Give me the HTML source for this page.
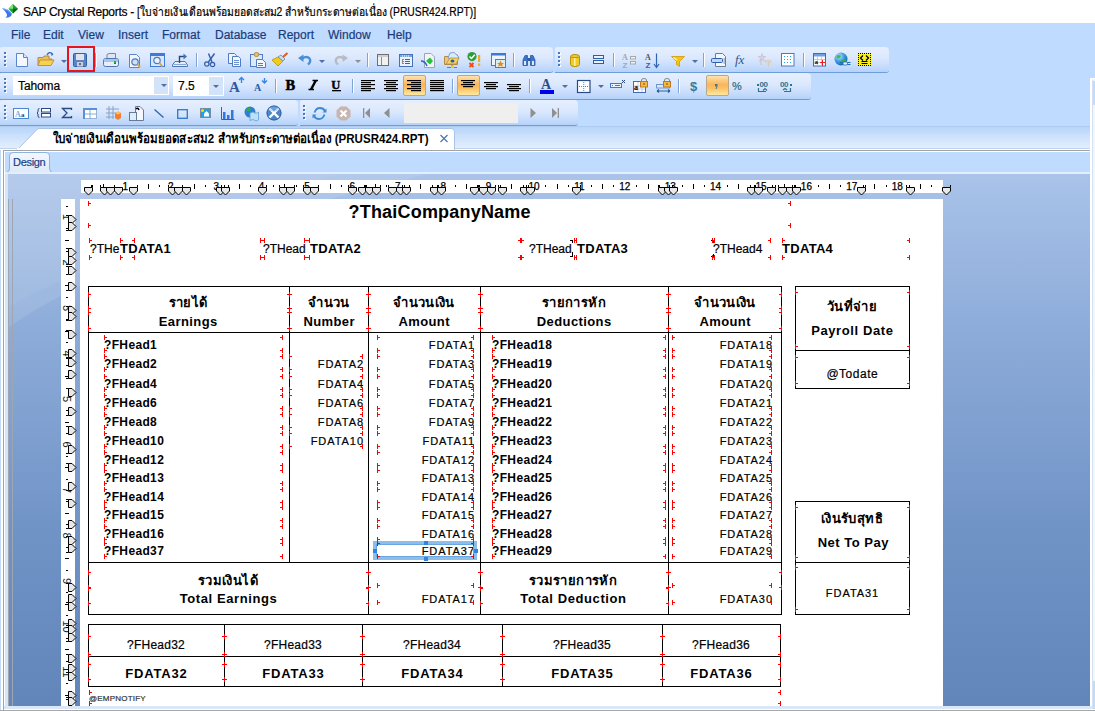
<!DOCTYPE html>
<html><head><meta charset="utf-8">
<style>
*{box-sizing:border-box}
html,body{margin:0;padding:0;width:1095px;height:711px;overflow:hidden;background:#fff;font-family:"Liberation Sans",sans-serif;position:relative}
.a{position:absolute}
.tx{position:absolute;white-space:nowrap}
.rg{-webkit-text-stroke:0.2px currentColor}
.strip{position:absolute;background:linear-gradient(#e5efff 0%,#dbe8fd 45%,#c8ddfc 75%,#b5d2fa 100%);border-bottom:1px solid #6f9ddb;border-radius:2px 4px 3px 0}
.mi{position:absolute;top:29px;font-size:12px;color:#15428b;white-space:nowrap}
svg{position:absolute;overflow:visible}
</style></head><body>

<div class="a" style="left:0px;top:0px;width:1095px;height:23px;background:#fff"></div>
<svg style="left:0;top:0" width="20" height="20" viewBox="0 0 20 20">
<path d="M2 8.2 Q9 8.5 11.8 13.5 Q12.2 17.5 5.5 17.8 Q10 15 2 8.2Z" fill="#3a78e8"/>
<path d="M3 8.6 Q8.5 9.5 10.8 13" stroke="#9cc4ff" stroke-width="0.8" fill="none"/>
<path d="M8.5 8.8 L13 4 L18 8.8 L13 13.5Z" fill="#1aa02e"/>
<path d="M8.5 8.8 L13 4 L13 8.8Z" fill="#7be37f"/>
<path d="M13 8.8 L18 8.8 L13 13.5Z" fill="#0b5e17"/>
</svg>
<div class="tx rg" style="left:23px;top:5.84px;font-size:12px;line-height:12px;font-weight:normal;color:#000;letter-spacing:-0.3px">SAP Crystal Reports - </div>
<div class="tx rg" style="left:137px;top:5.84px;font-size:12px;line-height:12px;font-weight:normal;color:#000;transform:scaleX(0.86);transform-origin:0 0">[ใบจ่ายเงินเดือนพร้อมยอดสะสม2 สำหรับกระดาษต่อเนื่อง (PRUSR424.RPT)]</div>
<div class="a" style="left:0px;top:23px;width:1095px;height:103px;background:#bfdbff"></div>
<div class="tx rg" style="left:11px;top:28.84px;font-size:12px;line-height:12px;font-weight:normal;color:#1b3c7a;">File</div>
<div class="tx rg" style="left:43px;top:28.84px;font-size:12px;line-height:12px;font-weight:normal;color:#1b3c7a;">Edit</div>
<div class="tx rg" style="left:78px;top:28.84px;font-size:12px;line-height:12px;font-weight:normal;color:#1b3c7a;">View</div>
<div class="tx rg" style="left:118px;top:28.84px;font-size:12px;line-height:12px;font-weight:normal;color:#1b3c7a;">Insert</div>
<div class="tx rg" style="left:162px;top:28.84px;font-size:12px;line-height:12px;font-weight:normal;color:#1b3c7a;">Format</div>
<div class="tx rg" style="left:215px;top:28.84px;font-size:12px;line-height:12px;font-weight:normal;color:#1b3c7a;">Database</div>
<div class="tx rg" style="left:278px;top:28.84px;font-size:12px;line-height:12px;font-weight:normal;color:#1b3c7a;">Report</div>
<div class="tx rg" style="left:328px;top:28.84px;font-size:12px;line-height:12px;font-weight:normal;color:#1b3c7a;">Window</div>
<div class="tx rg" style="left:387px;top:28.84px;font-size:12px;line-height:12px;font-weight:normal;color:#1b3c7a;">Help</div>
<div class="strip" style="left:0;top:47px;width:553px;height:26px"></div>
<div class="strip" style="left:555px;top:47px;width:334px;height:26px"></div>
<div class="strip" style="left:0;top:73px;width:811px;height:27px"></div>
<div class="strip" style="left:0;top:100px;width:298px;height:26px"></div>
<div class="strip" style="left:300px;top:100px;width:278px;height:26px"></div>
<svg style="left:4px;top:52px" width="3" height="16" viewBox="0 0 3 16"><rect x="1" y="1" width="2" height="2" fill="#fff"/><rect x="0" y="0" width="2" height="2" fill="#4a78c0"/><rect x="1" y="5" width="2" height="2" fill="#fff"/><rect x="0" y="4" width="2" height="2" fill="#4a78c0"/><rect x="1" y="9" width="2" height="2" fill="#fff"/><rect x="0" y="8" width="2" height="2" fill="#4a78c0"/><rect x="1" y="13" width="2" height="2" fill="#fff"/><rect x="0" y="12" width="2" height="2" fill="#4a78c0"/></svg>
<svg style="left:16px;top:53px" width="12" height="14" viewBox="0 0 12 14"><path d="M0.5 0.5H7.5L11.5 4.5V13.5H0.5Z" fill="#f4f8fe" stroke="#5a86cc"/><path d="M7.5 0.5V4.5H11.5" fill="#dfe9f7" stroke="#5a86cc"/></svg>
<svg style="left:37px;top:51px" width="18" height="16" viewBox="0 0 18 16"><path d="M1 6.5H6L7 5H12V8H15L13 14.5H1Z" fill="#e9c25a" stroke="#b4874a"/><path d="M3 9H17L14 14.5H1Z" fill="#f8d34a" stroke="#c0914a"/><path d="M10 4 Q12 0 15.5 3" stroke="#3d6ab3" fill="none" stroke-width="1.3"/><path d="M14 1.5L16.5 3.5L14.5 5Z" fill="#3d6ab3"/></svg>
<svg style="left:61px;top:60px" width="6" height="3" viewBox="0 0 6 3"><path d="M0 0H6L3 3Z" fill="#4d6ea8"/></svg>
<div class="a" style="left:67px;top:46px;width:28px;height:26px;border:2px solid #e8141c;background:rgba(200,222,252,0.35)"></div>
<svg style="left:73px;top:53px" width="14" height="14" viewBox="0 0 14 14"><rect x="0.5" y="0.5" width="13" height="13" rx="1" fill="#5b84c8" stroke="#35609f"/><rect x="3" y="1" width="8" height="6" fill="#dfe3ea"/><rect x="4" y="9" width="6" height="4.5" fill="#c9ced6"/><rect x="6" y="10" width="2" height="2" fill="#606b7a"/></svg>
<div class="a" style="left:95px;top:53px;width:1px;height:14px;background:#7fa5d8"></div>
<div class="a" style="left:96px;top:53px;width:1px;height:14px;background:#fff"></div>
<svg style="left:103px;top:53px" width="16" height="14" viewBox="0 0 16 14"><path d="M4 5V1.5L6 0.5H12.5V5" fill="#dfe6ef" stroke="#7b8797"/><rect x="0.5" y="5.5" width="15" height="8" rx="2" fill="#e9eef5" stroke="#4f76b4"/><rect x="1" y="6" width="14" height="3" fill="#a9c4e8"/><rect x="11" y="8" width="2" height="2" fill="#19b82f"/><rect x="11" y="10" width="2" height="1" fill="#e02020"/></svg>
<svg style="left:129px;top:54px" width="12" height="14" viewBox="0 0 12 14"><path d="M0.5 0.5H7.5L10.5 3.5V13.5H0.5Z" fill="#f2f6fc" stroke="#5a86cc"/><circle cx="6" cy="8" r="3.2" fill="#c9e4fa" stroke="#5477b8" stroke-width="1.2"/><path d="M8.3 10.3L11 13" stroke="#d9a540" stroke-width="1.8"/></svg>
<svg style="left:150px;top:53px" width="16" height="15" viewBox="0 0 16 15"><rect x="0.5" y="0.5" width="14" height="13" fill="#d8e8fb" stroke="#3f7bd6"/><rect x="1" y="1" width="13" height="2" fill="#3f7bd6"/><circle cx="7" cy="7.5" r="3.2" fill="#e8f4fe" stroke="#5477b8" stroke-width="1.2"/><path d="M9.3 9.8L12.5 13.5" stroke="#d9a540" stroke-width="1.8"/></svg>
<svg style="left:172px;top:53px" width="16" height="14" viewBox="0 0 16 14"><path d="M3 8.5H13L15.5 12V13.5H0.5V12Z" fill="#e8eef7" stroke="#4f76b4"/><rect x="2" y="11" width="12" height="1" fill="#8aa9d6"/><path d="M7.5 10V3.5H12" stroke="#27487e" stroke-width="1.4" fill="none"/><path d="M11.5 0.5L15 3.5L11.5 6.5Z" fill="#3e6fc0"/></svg>
<div class="a" style="left:196px;top:53px;width:1px;height:14px;background:#7fa5d8"></div>
<div class="a" style="left:197px;top:53px;width:1px;height:14px;background:#fff"></div>
<svg style="left:204px;top:53px" width="12" height="14" viewBox="0 0 12 14"><path d="M10.5 0.5L4.5 9" stroke="#2f5ea8" stroke-width="1.4"/><path d="M4.5 0.5L8 9" stroke="#2f5ea8" stroke-width="1.4"/><circle cx="2.8" cy="11" r="2.2" fill="none" stroke="#2f5ea8" stroke-width="1.2"/><circle cx="8.5" cy="11.5" r="2.2" fill="none" stroke="#2f5ea8" stroke-width="1.2"/></svg>
<svg style="left:228px;top:53px" width="14" height="14" viewBox="0 0 14 14"><path d="M0.5 0.5H6.5L8.5 2.5V10.5H0.5Z" fill="#eef4fc" stroke="#4f7cc4"/><path d="M4.5 3.5H10.5L12.5 5.5V13.5H4.5Z" fill="#f4f8fe" stroke="#4f7cc4"/><path d="M6 7.5H11M6 9.5H11M6 11.5H11" stroke="#6a90cf"/></svg>
<svg style="left:250px;top:52px" width="16" height="16" viewBox="0 0 16 16"><rect x="0.5" y="2.5" width="12" height="12" fill="#dce9f8" stroke="#4f7cc4"/><ellipse cx="6.5" cy="2.5" rx="2.5" ry="2" fill="#e5c26a" stroke="#b08c3a"/><path d="M6.5 7.5H12.5L15.5 10.5V15.5H6.5Z" fill="#f4f8fe" stroke="#4f7cc4"/><path d="M8 11.5H13M8 13.5H13" stroke="#3b82d8"/></svg>
<svg style="left:272px;top:53px" width="16" height="14" viewBox="0 0 16 14"><path d="M0 7L6 13L11 8L6 4Z" fill="#f0cc1d" stroke="#b99000" stroke-width="0.8"/><path d="M6 4L11 8L13 6L9 2Z" fill="#cfd9e8" stroke="#6c86b0" stroke-width="0.8"/><path d="M11 4L15.5 0" stroke="#e05a1c" stroke-width="2"/></svg>
<svg style="left:298px;top:54px" width="14" height="11" viewBox="0 0 14 11"><path d="M4 4.5 Q9 1.5 11.5 4.5 Q13.5 7.5 10 10.5" stroke="#4b8ed6" stroke-width="2.4" fill="none"/><path d="M0 4L5.5 0.5V8Z" fill="#4b8ed6"/></svg>
<svg style="left:319px;top:60px" width="6" height="3" viewBox="0 0 6 3"><path d="M0 0H6L3 3Z" fill="#4d6ea8"/></svg>
<svg style="left:334px;top:54px" width="14" height="11" viewBox="0 0 14 11"><path d="M10 4.5 Q5 1.5 2.5 4.5 Q0.5 7.5 4 10.5" stroke="#b8bcc2" stroke-width="2.4" fill="none"/><path d="M14 4L8.5 0.5V8Z" fill="#b8bcc2"/></svg>
<svg style="left:355px;top:60px" width="6" height="3" viewBox="0 0 6 3"><path d="M0 0H6L3 3Z" fill="#8a8f96"/></svg>
<div class="a" style="left:367px;top:53px;width:1px;height:14px;background:#7fa5d8"></div>
<div class="a" style="left:368px;top:53px;width:1px;height:14px;background:#fff"></div>
<svg style="left:377px;top:54px" width="12" height="12" viewBox="0 0 12 12"><rect x="0.5" y="0.5" width="11" height="11" fill="#f1f1f1" stroke="#6f6f6f"/><rect x="1" y="1" width="10" height="2" fill="#cfcfcf"/><path d="M4.5 3V11" stroke="#8a8a8a"/></svg>
<svg style="left:399px;top:54px" width="14" height="13" viewBox="0 0 14 13"><rect x="0.5" y="0.5" width="13" height="12" fill="#eaf3fd" stroke="#4671b7"/><rect x="1" y="1" width="12" height="2" fill="#6aa8e8"/><rect x="3" y="1.5" width="1" height="1" fill="#fff"/><rect x="5" y="1.5" width="1" height="1" fill="#fff"/><rect x="7" y="1.5" width="1" height="1" fill="#fff"/><rect x="9" y="1.5" width="1" height="1" fill="#fff"/><rect x="3" y="5" width="1" height="5" fill="#8a8a8a"/><rect x="3" y="5" width="2" height="1" fill="#8a8a8a"/><rect x="3" y="7" width="2" height="1" fill="#8a8a8a"/><rect x="3" y="9" width="2" height="1" fill="#8a8a8a"/><rect x="6" y="5" width="5" height="1" fill="#2f64d0"/><rect x="6" y="7" width="5" height="1" fill="#2f64d0"/><rect x="6" y="9" width="5" height="1" fill="#2f64d0"/></svg>
<svg style="left:421px;top:53px" width="14" height="15" viewBox="0 0 14 15"><path d="M3.5 0.5H10L13.5 4V14.5H3.5Z" fill="#f2f4f8" stroke="#9aa6b8"/><path d="M5 8L9 4.5L12 8L9 11.5Z" fill="#1ec43a"/><path d="M0 8 Q4 8 6 13" stroke="#2f5ed0" stroke-width="1.5" fill="none"/></svg>
<svg style="left:444px;top:52px" width="16" height="16" viewBox="0 0 16 16"><path d="M0.5 4.5H6.5L7.5 3H13.5V12.5H0.5Z" fill="#ecc873" stroke="#b48a4a"/><path d="M6 1L10 0.5L15 5L13 9L4 6Z" fill="#d7ecfa" stroke="#6a8fc7" stroke-width="0.8"/><path d="M2 12 L6 6 H15 L12 12Z" fill="#f4d45a" stroke="#b48a4a" stroke-width="0.8"/><ellipse cx="8.5" cy="9" rx="2" ry="1.6" fill="#2f56b8"/><path d="M8 12.5V15M3 15.5H13" stroke="#8a7a50"/><rect x="7" y="14" width="3" height="2" fill="#e8d020"/></svg>
<svg style="left:467px;top:52px" width="15" height="16" viewBox="0 0 15 16"><circle cx="5" cy="4.6" r="4.6" fill="#2f9e3a"/><path d="M2.5 4.5L4.5 6.5L7.8 2.8" stroke="#fff" stroke-width="1.5" fill="none"/><path d="M2.5 11L6.5 15M6.5 11L2.5 15" stroke="#f04a18" stroke-width="1.8"/><rect x="11" y="3" width="2.2" height="7" fill="#f5a623"/><rect x="11" y="11.5" width="2.2" height="2.2" fill="#f5a623"/></svg>
<svg style="left:491px;top:53px" width="15" height="15" viewBox="0 0 15 15"><rect x="0.5" y="0.5" width="14" height="12" fill="#eef5fd" stroke="#3a7ad8"/><rect x="1" y="1" width="13" height="1.5" fill="#3a7ad8"/><rect x="4.5" y="6.5" width="10" height="8" fill="#d9efef" stroke="#4b8a8a"/><path d="M9.5 7.5L10.6 10H13L11.2 11.5L11.8 14L9.5 12.6L7.2 14L7.8 11.5L6 10H8.4Z" fill="#f0801a"/></svg>
<div class="a" style="left:513px;top:53px;width:1px;height:14px;background:#7fa5d8"></div>
<div class="a" style="left:514px;top:53px;width:1px;height:14px;background:#fff"></div>
<svg style="left:522px;top:54px" width="14" height="12" viewBox="0 0 14 12"><path d="M1 11.5V6L3 1.5H5.5V11.5Z" fill="#3e74c8" stroke="#2a5aa8" stroke-width="0.8"/><path d="M8.5 11.5V1.5H11L13 6V11.5Z" fill="#3e74c8" stroke="#2a5aa8" stroke-width="0.8"/><rect x="5.5" y="4" width="3" height="3" fill="#2a5aa8"/><rect x="2" y="7" width="2" height="4" fill="#dfe9f7"/><rect x="10" y="7" width="2" height="4" fill="#dfe9f7"/></svg>
<svg style="left:558px;top:52px" width="3" height="16" viewBox="0 0 3 16"><rect x="1" y="1" width="2" height="2" fill="#fff"/><rect x="0" y="0" width="2" height="2" fill="#4a78c0"/><rect x="1" y="5" width="2" height="2" fill="#fff"/><rect x="0" y="4" width="2" height="2" fill="#4a78c0"/><rect x="1" y="9" width="2" height="2" fill="#fff"/><rect x="0" y="8" width="2" height="2" fill="#4a78c0"/><rect x="1" y="13" width="2" height="2" fill="#fff"/><rect x="0" y="12" width="2" height="2" fill="#4a78c0"/></svg>
<svg style="left:570px;top:54px" width="10" height="13" viewBox="0 0 10 13"><path d="M0.5 2.5 Q0.5 0.5 5 0.5 Q9.5 0.5 9.5 2.5 V10.5 Q9.5 12.5 5 12.5 Q0.5 12.5 0.5 10.5Z" fill="#f0cc28" stroke="#b8920a"/><path d="M1 3 Q5 4.5 9 3" stroke="#b8920a" fill="none"/><rect x="4" y="4" width="1.5" height="8" fill="#fff3a0"/></svg>
<svg style="left:593px;top:55px" width="11" height="9" viewBox="0 0 11 9"><rect x="0.5" y="0.5" width="10" height="3" fill="#eaf2fc" stroke="#2f5ea8"/><rect x="0.5" y="5.5" width="10" height="3" fill="#eaf2fc" stroke="#2f5ea8"/></svg>
<div class="a" style="left:613px;top:53px;width:1px;height:14px;background:#7fa5d8"></div>
<div class="a" style="left:614px;top:53px;width:1px;height:14px;background:#fff"></div>
<svg style="left:622px;top:53px" width="15" height="15" viewBox="0 0 15 15"><text x="0" y="7" font-size="8" font-family="Liberation Serif" fill="#a8a8a8" font-weight="bold">A</text><text x="0.5" y="14.5" font-size="8" font-family="Liberation Sans" fill="#a8a8a8" font-weight="bold">Z</text><rect x="8.5" y="3.5" width="5" height="2.5" fill="#f2f2f2" stroke="#a8a8a8"/><rect x="8.5" y="8.5" width="5" height="2.5" fill="#f2f2f2" stroke="#a8a8a8"/></svg>
<svg style="left:645px;top:53px" width="15" height="15" viewBox="0 0 15 15"><text x="0" y="7" font-size="8" font-family="Liberation Serif" fill="#555" font-weight="bold">A</text><text x="0.5" y="14.5" font-size="8" font-family="Liberation Sans" fill="#2f64b0" font-weight="bold">Z</text><path d="M11.5 0.5V14" stroke="#2f64b0" stroke-width="1.2"/><path d="M9 11L11.5 14.5L14 11" stroke="#2f64b0" stroke-width="1.2" fill="none"/></svg>
<svg style="left:671px;top:56px" width="14" height="11" viewBox="0 0 14 11"><path d="M0.5 0.5H13.5L8.5 5.5V10.5L5.5 8.5V5.5Z" fill="#f7c416" stroke="#d09a00" stroke-width="0.8"/><path d="M2.5 1.5L6 4" stroke="#fff6b0" stroke-width="1.2"/></svg>
<svg style="left:692px;top:60px" width="6" height="3" viewBox="0 0 6 3"><path d="M0 0H6L3 3Z" fill="#4d6ea8"/></svg>
<div class="a" style="left:703px;top:53px;width:1px;height:14px;background:#7fa5d8"></div>
<div class="a" style="left:704px;top:53px;width:1px;height:14px;background:#fff"></div>
<svg style="left:711px;top:53px" width="16" height="14" viewBox="0 0 16 14"><path d="M4.5 0.5H11.5L14.5 3.5V13.5H4.5Z" fill="#f3f6fb" stroke="#6d7c94"/><rect x="0.5" y="5.5" width="11" height="4" rx="1" fill="#bcd8f6" stroke="#2f5ea8"/><path d="M12.5 6H14M12.5 8H14M12.5 10H14" stroke="#6d7c94"/></svg>
<svg style="left:735px;top:53px" width="14" height="14" viewBox="0 0 14 14"><text x="0" y="11" font-size="13" font-family="Liberation Serif" font-style="italic" fill="#33548a">fx</text></svg>
<svg style="left:758px;top:53px" width="14" height="14" viewBox="0 0 14 14"><path d="M4 0.5L5 3.5H8L5.5 5.5L6.5 8.5L4 6.5L1.5 8.5L2.5 5.5L0 3.5H3Z" fill="#d8d0dc" stroke="#c0b8c8" stroke-width="0.5"/><path d="M3 6V12" stroke="#c8bcc8"/><path d="M7 7.5L10.5 6L13.5 7.5V11.5L10.5 13.5L7 11.5Z" fill="#ded8d2"/><path d="M7 7.5L10.5 9L13.5 7.5M10.5 9V13.5" stroke="#c9c2ba" fill="none" stroke-width="0.6"/></svg>
<svg style="left:781px;top:53px" width="14" height="14" viewBox="0 0 14 14"><rect x="0.5" y="0.5" width="12.5" height="12.5" fill="#fff" stroke="#4a7ac2"/><rect x="3" y="3" width="1" height="1" fill="#33a0e6"/><rect x="3" y="6" width="1" height="1" fill="#33a0e6"/><rect x="3" y="9" width="1" height="1" fill="#33a0e6"/><rect x="6" y="3" width="1" height="1" fill="#33a0e6"/><rect x="6" y="6" width="1" height="1" fill="#33a0e6"/><rect x="6" y="9" width="1" height="1" fill="#33a0e6"/><rect x="9" y="3" width="1" height="1" fill="#33a0e6"/><rect x="9" y="6" width="1" height="1" fill="#33a0e6"/><rect x="9" y="9" width="1" height="1" fill="#33a0e6"/></svg>
<div class="a" style="left:803px;top:53px;width:1px;height:14px;background:#7fa5d8"></div>
<div class="a" style="left:804px;top:53px;width:1px;height:14px;background:#fff"></div>
<svg style="left:813px;top:53px" width="13" height="14" viewBox="0 0 13 14"><rect x="0.5" y="0.5" width="12" height="12.5" fill="#fff" stroke="#3e6db8"/><rect x="1" y="1" width="11" height="2.5" fill="#6fa0e6"/><path d="M1 6.5H12M1 9.5H12M4.5 3.5V13M8.5 3.5V13" stroke="#a9c4ea" stroke-width="0.8"/><text x="1.5" y="10.5" font-size="7" font-weight="bold" font-family="Liberation Serif" fill="#000">a</text><path d="M7 9.5H12M9.5 7V13" stroke="#e82020"/></svg>
<svg style="left:834px;top:52px" width="17" height="16" viewBox="0 0 17 16"><defs><radialGradient id="gl" cx="0.35" cy="0.3" r="0.8"><stop offset="0" stop-color="#bfe6ff"/><stop offset="0.5" stop-color="#3a9ae0"/><stop offset="1" stop-color="#1a5aa8"/></radialGradient></defs><circle cx="7" cy="7" r="6.5" fill="url(#gl)"/><path d="M2.5 4 Q5 2 7 4 Q6 7 3.5 6.5Z M8 8 Q11 6.5 12.5 9 Q10 11.5 8.5 10Z" fill="#3ab43c" opacity="0.9"/><path d="M6 12.5H16.5M6 10.5H16.5" stroke="#1a6fb8" stroke-width="1.2"/><rect x="9" y="10" width="4.5" height="3" rx="1" fill="#e8f2fc" stroke="#1a6fb8" stroke-width="0.8"/></svg>
<svg style="left:858px;top:53px" width="13" height="13" viewBox="0 0 13 13"><rect x="0" y="0" width="13" height="13" fill="#f8f020"/><rect x="0" y="0" width="1" height="1" fill="#000"/><rect x="0" y="12" width="1" height="1" fill="#000"/><rect x="0" y="0" width="1" height="1" fill="#000"/><rect x="12" y="0" width="1" height="1" fill="#000"/><rect x="2" y="0" width="1" height="1" fill="#000"/><rect x="2" y="12" width="1" height="1" fill="#000"/><rect x="0" y="2" width="1" height="1" fill="#000"/><rect x="12" y="2" width="1" height="1" fill="#000"/><rect x="4" y="0" width="1" height="1" fill="#000"/><rect x="4" y="12" width="1" height="1" fill="#000"/><rect x="0" y="4" width="1" height="1" fill="#000"/><rect x="12" y="4" width="1" height="1" fill="#000"/><rect x="6" y="0" width="1" height="1" fill="#000"/><rect x="6" y="12" width="1" height="1" fill="#000"/><rect x="0" y="6" width="1" height="1" fill="#000"/><rect x="12" y="6" width="1" height="1" fill="#000"/><rect x="8" y="0" width="1" height="1" fill="#000"/><rect x="8" y="12" width="1" height="1" fill="#000"/><rect x="0" y="8" width="1" height="1" fill="#000"/><rect x="12" y="8" width="1" height="1" fill="#000"/><rect x="10" y="0" width="1" height="1" fill="#000"/><rect x="10" y="12" width="1" height="1" fill="#000"/><rect x="0" y="10" width="1" height="1" fill="#000"/><rect x="12" y="10" width="1" height="1" fill="#000"/><rect x="12" y="0" width="1" height="1" fill="#000"/><rect x="12" y="12" width="1" height="1" fill="#000"/><rect x="0" y="12" width="1" height="1" fill="#000"/><rect x="12" y="12" width="1" height="1" fill="#000"/><path d="M5 2.5L2.5 5L5 7.5M8 2.5L10.5 5L8 7.5" stroke="#000" fill="none" stroke-width="1.3"/><path d="M3.5 8.5H9.5M3.5 10.5H9.5" stroke="#000"/></svg>
<svg style="left:4px;top:78px" width="3" height="16" viewBox="0 0 3 16"><rect x="1" y="1" width="2" height="2" fill="#fff"/><rect x="0" y="0" width="2" height="2" fill="#4a78c0"/><rect x="1" y="5" width="2" height="2" fill="#fff"/><rect x="0" y="4" width="2" height="2" fill="#4a78c0"/><rect x="1" y="9" width="2" height="2" fill="#fff"/><rect x="0" y="8" width="2" height="2" fill="#4a78c0"/><rect x="1" y="13" width="2" height="2" fill="#fff"/><rect x="0" y="12" width="2" height="2" fill="#4a78c0"/></svg>
<div class="a" style="left:13px;top:76px;width:156px;height:19px;background:#fff"></div>
<div class="a" style="left:154px;top:77px;width:14px;height:17px;background:#d3e3fa"></div>
<svg style="left:161px;top:84px" width="6" height="3" viewBox="0 0 6 3"><path d="M0 0H6L3 3Z" fill="#4d6ea8"/></svg>
<div class="tx rg" style="left:18px;top:79.54px;font-size:12px;line-height:12px;font-weight:normal;color:#000;letter-spacing:-0.1px">Tahoma</div>
<div class="a" style="left:173px;top:76px;width:51px;height:20px;background:#fff"></div>
<div class="a" style="left:209px;top:77px;width:14px;height:18px;background:#d3e3fa"></div>
<svg style="left:213px;top:85px" width="6" height="3" viewBox="0 0 6 3"><path d="M0 0H6L3 3Z" fill="#4d6ea8"/></svg>
<div class="tx rg" style="left:178px;top:79.84px;font-size:12px;line-height:12px;font-weight:normal;color:#000;">7.5</div>
<svg style="left:229px;top:77px" width="16" height="16" viewBox="0 0 16 16"><text x="0" y="15" font-size="15" font-family="Liberation Serif" font-weight="bold" fill="#2c5aa0">A</text><path d="M12.5 0.5V6M10 3L12.5 0.5L15 3" stroke="#3a86e0" stroke-width="1.4" fill="none"/></svg>
<svg style="left:254px;top:78px" width="14" height="14" viewBox="0 0 14 14"><text x="0" y="13" font-size="10" font-family="Liberation Serif" font-weight="bold" fill="#2c5aa0">A</text><path d="M10.5 0V5M8 2.5L10.5 5L13 2.5" stroke="#3a86e0" stroke-width="1.4" fill="none"/></svg>
<div class="a" style="left:275px;top:79px;width:1px;height:14px;background:#7fa5d8"></div>
<div class="a" style="left:276px;top:79px;width:1px;height:14px;background:#fff"></div>
<svg style="left:285px;top:79px" width="12" height="13" viewBox="0 0 12 13"><text x="0.5" y="11" font-size="14.5" font-family="Liberation Serif" font-weight="bold" fill="#000" stroke="#000" stroke-width="0.5">B</text></svg>
<svg style="left:308px;top:80px" width="12" height="12" viewBox="0 0 12 12"><path d="M4.5 0.5H10 M0.5 9.5H6 M7.8 0.5L3 9.5" stroke="#000" stroke-width="1.3" fill="none"/><path d="M7.8 0.5L3 9.5" stroke="#000" stroke-width="2.4"/></svg>
<svg style="left:331px;top:79px" width="12" height="13" viewBox="0 0 12 13"><text x="0.3" y="9.5" font-size="12.5" font-family="Liberation Serif" font-weight="bold" fill="#000" stroke="#000" stroke-width="0.4">U</text><rect x="1" y="11" width="9" height="1.3" fill="#000"/></svg>
<div class="a" style="left:352px;top:79px;width:1px;height:14px;background:#7fa5d8"></div>
<div class="a" style="left:353px;top:79px;width:1px;height:14px;background:#fff"></div>
<svg style="left:361px;top:80px" width="15" height="12" viewBox="0 0 15 12"><rect x="0" y="0" width="14" height="1.2" fill="#000"/><rect x="0" y="2" width="10" height="1.2" fill="#000"/><rect x="0" y="4" width="14" height="1.2" fill="#000"/><rect x="0" y="6" width="10" height="1.2" fill="#000"/><rect x="0" y="8" width="14" height="1.2" fill="#000"/><rect x="0" y="10" width="10" height="1.2" fill="#000"/></svg>
<svg style="left:384px;top:80px" width="15" height="12" viewBox="0 0 15 12"><rect x="0" y="0" width="14" height="1.2" fill="#000"/><rect x="2" y="2" width="10" height="1.2" fill="#000"/><rect x="0" y="4" width="14" height="1.2" fill="#000"/><rect x="2" y="6" width="10" height="1.2" fill="#000"/><rect x="0" y="8" width="14" height="1.2" fill="#000"/><rect x="2" y="10" width="10" height="1.2" fill="#000"/></svg>
<div class="a" style="left:403px;top:75px;width:23px;height:21px;background:linear-gradient(#fde3b0 0%,#fbb558 45%,#fbc166 65%,#fee8a0 100%);border:1px solid #b9a788;border-radius:2px"></div>
<svg style="left:407px;top:80px" width="15" height="12" viewBox="0 0 15 12"><rect x="0" y="0" width="14" height="1.2" fill="#000"/><rect x="4" y="2" width="10" height="1.2" fill="#000"/><rect x="0" y="4" width="14" height="1.2" fill="#000"/><rect x="4" y="6" width="10" height="1.2" fill="#000"/><rect x="0" y="8" width="14" height="1.2" fill="#000"/><rect x="4" y="10" width="10" height="1.2" fill="#000"/></svg>
<svg style="left:430px;top:80px" width="15" height="12" viewBox="0 0 15 12"><rect x="0" y="0" width="14" height="1.2" fill="#000"/><rect x="0" y="2" width="14" height="1.2" fill="#000"/><rect x="0" y="4" width="14" height="1.2" fill="#000"/><rect x="0" y="6" width="14" height="1.2" fill="#000"/><rect x="0" y="8" width="14" height="1.2" fill="#000"/><rect x="0" y="10" width="14" height="1.2" fill="#000"/></svg>
<div class="a" style="left:452px;top:79px;width:1px;height:14px;background:#7fa5d8"></div>
<div class="a" style="left:453px;top:79px;width:1px;height:14px;background:#fff"></div>
<div class="a" style="left:457px;top:75px;width:23px;height:21px;background:linear-gradient(#fde3b0 0%,#fbb558 45%,#fbc166 65%,#fee8a0 100%);border:1px solid #b9a788;border-radius:2px"></div>
<svg style="left:461px;top:80px" width="15" height="12" viewBox="0 0 15 12"><rect x="0" y="0" width="14" height="1.2" fill="#000"/><rect x="2" y="2" width="10" height="1.2" fill="#000"/><rect x="0" y="4" width="14" height="1.2" fill="#000"/><rect x="2" y="6" width="10" height="1.2" fill="#000"/></svg>
<svg style="left:484px;top:82px" width="15" height="8" viewBox="0 0 15 8"><rect x="0" y="0" width="14" height="1.2" fill="#000"/><rect x="2" y="2" width="10" height="1.2" fill="#000"/><rect x="0" y="4" width="14" height="1.2" fill="#000"/><rect x="2" y="6" width="10" height="1.2" fill="#000"/></svg>
<svg style="left:507px;top:84px" width="15" height="8" viewBox="0 0 15 8"><rect x="0" y="0" width="14" height="1.2" fill="#000"/><rect x="2" y="2" width="10" height="1.2" fill="#000"/><rect x="0" y="4" width="14" height="1.2" fill="#000"/><rect x="2" y="6" width="10" height="1.2" fill="#000"/></svg>
<div class="a" style="left:529px;top:79px;width:1px;height:14px;background:#7fa5d8"></div>
<div class="a" style="left:530px;top:79px;width:1px;height:14px;background:#fff"></div>
<svg style="left:540px;top:77px" width="15" height="17" viewBox="0 0 15 17"><text x="1" y="11.5" font-size="14" font-family="Liberation Serif" font-weight="bold" fill="#2c4f8a">A</text><rect x="0" y="13" width="14" height="4" fill="#0000f0"/></svg>
<svg style="left:562px;top:85px" width="6" height="3" viewBox="0 0 6 3"><path d="M0 0H6L3 3Z" fill="#4d6ea8"/></svg>
<svg style="left:577px;top:80px" width="14" height="13" viewBox="0 0 14 13"><rect x="0.5" y="0.5" width="12.5" height="12" fill="#fff" stroke="#2a4a86" stroke-width="1.2"/><path d="M6.75 2V11M2 6.5H11.5" stroke="#3a86e0" stroke-dasharray="1 1"/></svg>
<svg style="left:598px;top:85px" width="6" height="3" viewBox="0 0 6 3"><path d="M0 0H6L3 3Z" fill="#4d6ea8"/></svg>
<svg style="left:610px;top:79px" width="16" height="10" viewBox="0 0 16 10"><rect x="0.5" y="4.5" width="11" height="4" fill="#eaf3fd" stroke="#3a7ad8"/><rect x="2" y="6" width="1" height="1" fill="#3a7ad8"/><path d="M5 6.5H10" stroke="#3a7ad8"/><path d="M12 1L15 4M15 1L12 4" stroke="#2a4a86"/></svg>
<svg style="left:633px;top:78px" width="16" height="16" viewBox="0 0 16 16"><rect x="0.5" y="3.5" width="12" height="11" fill="#fff" stroke="#3e6db8"/><path d="M1 8H12M1 11H12M5 4V14M9 4V14" stroke="#a9c4ea" stroke-width="0.8"/><text x="1" y="12" font-size="8" font-weight="bold" font-family="Liberation Serif" fill="#000">a</text><path d="M8.5 3.5V2 Q8.5 0.5 11 0.5 Q13.5 0.5 13.5 2V3.5" stroke="#8a8a8a" fill="none"/><rect x="7.5" y="3.5" width="7" height="5.5" fill="#f0b848" stroke="#c07820"/><rect x="10" y="5.5" width="2" height="1" fill="#8a4a10"/></svg>
<svg style="left:656px;top:78px" width="16" height="16" viewBox="0 0 16 16"><rect x="0.5" y="6.5" width="13" height="3.5" fill="#dde9f7" stroke="#6f96cc"/><path d="M1 13H14M1 13L3 11.5M1 13L3 14.5M14 13L12 11.5M14 13L12 14.5" stroke="#2f5ea8" stroke-width="1.2" fill="none"/><path d="M8.5 3.5V2 Q8.5 0.5 11 0.5 Q13.5 0.5 13.5 2V3.5" stroke="#8a8a8a" fill="none"/><rect x="7.5" y="3.5" width="7" height="5.5" fill="#f0b848" stroke="#c07820"/><rect x="10" y="5.5" width="2" height="1" fill="#8a4a10"/></svg>
<div class="a" style="left:678px;top:79px;width:1px;height:14px;background:#7fa5d8"></div>
<div class="a" style="left:679px;top:79px;width:1px;height:14px;background:#fff"></div>
<svg style="left:690px;top:79px" width="9" height="14" viewBox="0 0 9 14"><text x="0" y="12" font-size="13" font-family="Liberation Sans" font-weight="bold" fill="#3a7a94">$</text></svg>
<div class="a" style="left:706px;top:75px;width:23px;height:21px;background:linear-gradient(#fde3b0 0%,#fbb558 45%,#fbc166 65%,#fee8a0 100%);border:1px solid #b9a788;border-radius:2px"></div>
<svg style="left:715px;top:84px" width="4" height="6" viewBox="0 0 4 6"><rect x="0" y="0" width="2.5" height="2.5" fill="#3a7a94"/><path d="M2 2.5L1 5" stroke="#3a7a94" stroke-width="1"/></svg>
<svg style="left:732px;top:81px" width="15" height="10" viewBox="0 0 15 10"><text x="0" y="9" font-size="11" font-family="Liberation Sans" font-weight="bold" fill="#3a7a94">%</text></svg>
<svg style="left:757px;top:80px" width="13" height="13" viewBox="0 0 13 13"><rect x="0" y="4" width="2" height="2" fill="#2f7490"/><text x="2.5" y="6.5" font-size="8" font-weight="bold" font-family="Liberation Sans" fill="#2f7490" letter-spacing="-0.5">00</text><path d="M1.5 8V11.5H9 M6 10.5L8 8.5L10 10.5" stroke="#2f7490" stroke-width="1.2" fill="none"/></svg>
<svg style="left:780px;top:80px" width="13" height="13" viewBox="0 0 13 13"><text x="0" y="6.5" font-size="8" font-weight="bold" font-family="Liberation Sans" fill="#2f7490" letter-spacing="-0.5">00</text><rect x="10" y="4" width="2" height="2" fill="#2f7490"/><path d="M10.5 8V11.5H4 M3 10L5 8.5L7 10" stroke="#2f7490" stroke-width="1.2" fill="none"/></svg>
<svg style="left:4px;top:105px" width="3" height="16" viewBox="0 0 3 16"><rect x="1" y="1" width="2" height="2" fill="#fff"/><rect x="0" y="0" width="2" height="2" fill="#4a78c0"/><rect x="1" y="5" width="2" height="2" fill="#fff"/><rect x="0" y="4" width="2" height="2" fill="#4a78c0"/><rect x="1" y="9" width="2" height="2" fill="#fff"/><rect x="0" y="8" width="2" height="2" fill="#4a78c0"/><rect x="1" y="13" width="2" height="2" fill="#fff"/><rect x="0" y="12" width="2" height="2" fill="#4a78c0"/></svg>
<svg style="left:13px;top:108px" width="16" height="11" viewBox="0 0 16 11"><rect x="0.5" y="0.5" width="15" height="10" fill="#fff" stroke="#4a86d6"/><text x="2" y="8.5" font-size="8" font-family="Liberation Serif" font-weight="bold" fill="#7ea6e0">A</text><text x="8" y="8.5" font-size="7" font-family="Liberation Serif" font-weight="bold" fill="#1f3f7a">a</text></svg>
<svg style="left:37px;top:108px" width="14" height="10" viewBox="0 0 14 10"><path d="M2.5 0.5Q1 0.5 1 2V4L0 5L1 6V8Q1 9.5 2.5 9.5" stroke="#2a4a86" fill="none"/><rect x="4.5" y="0.5" width="9" height="3.5" fill="#fff" stroke="#2a4a86"/><rect x="4.5" y="5.5" width="9" height="3.5" fill="#fff" stroke="#2a4a86"/></svg>
<svg style="left:62px;top:108px" width="10" height="10" viewBox="0 0 10 10"><path d="M9.5 2V0.5H0.5L5 5L0.5 9.5H9.5V8" stroke="#2a4a86" stroke-width="1.3" fill="none"/></svg>
<svg style="left:83px;top:108px" width="14" height="11" viewBox="0 0 14 11"><rect x="0.5" y="0.5" width="13" height="10" fill="#fff" stroke="#9ab2d6"/><rect x="0" y="0" width="14" height="2" fill="#5b8fd8"/><rect x="0" y="0" width="2" height="11" fill="#5b8fd8"/><path d="M7 2V11M2 6H14" stroke="#7fb0d8"/></svg>
<svg style="left:106px;top:106px" width="15" height="15" viewBox="0 0 15 15"><path d="M3 0V13M7 0V13M0 3H13M0 7H13M0 11H8" stroke="#8aa0c8"/><path d="M9 7L12 5.5L15 7V12L12 14L9 12Z" fill="#f08030"/><path d="M9 7L12 8.5L15 7L12 5.5Z" fill="#ffc060"/></svg>
<svg style="left:129px;top:106px" width="15" height="15" viewBox="0 0 15 15"><path d="M6.5 0.5H11L14.5 4V14.5H6.5Z" fill="#f4f8fe" stroke="#6a7a96"/><rect x="0.5" y="6.5" width="7" height="8" fill="#dbeefd" stroke="#6a7a96"/><path d="M7 3Q9 1 10 4" stroke="#000" stroke-width="1.5" fill="none"/></svg>
<svg style="left:154px;top:109px" width="10" height="9" viewBox="0 0 10 9"><path d="M0.5 0.5L9.5 8.5" stroke="#2f64b0" stroke-width="1.3"/></svg>
<svg style="left:177px;top:109px" width="11" height="10" viewBox="0 0 11 10"><rect x="0.7" y="0.7" width="9.6" height="8.6" fill="none" stroke="#2f78d0" stroke-width="1.3"/></svg>
<svg style="left:200px;top:108px" width="11" height="10" viewBox="0 0 11 10"><rect x="0.5" y="0.5" width="10" height="9" fill="#1fa0e8" stroke="#7a8a96"/><path d="M4 5.5L6.5 3L9 5.5V8.5H4Z" fill="#fff"/><circle cx="2.5" cy="2.5" r="1.5" fill="#ffe000"/></svg>
<svg style="left:221px;top:107px" width="14" height="13" viewBox="0 0 14 13"><path d="M0.5 0V12.5H13.5" stroke="#2f64b0" fill="none"/><rect x="2" y="5" width="2.5" height="7" fill="#2f78e0"/><rect x="6" y="8" width="2.5" height="4" fill="#2f78e0"/><rect x="10" y="3" width="2.5" height="9" fill="#2f78e0"/></svg>
<svg style="left:244px;top:106px" width="15" height="15" viewBox="0 0 15 15"><circle cx="6" cy="6" r="5.5" fill="#2f7fd0"/><path d="M2 3Q5 1 7 3Q6 6 3 5Z M7 7Q10 5 11 8Q9 10 7 9Z" fill="#2fb03a"/><path d="M6 7L9 6L12 7.5L14.5 6V14L12 15L9 13.5L6 14.5Z" fill="#bde0f8" stroke="#5aa0d8" stroke-width="0.8"/></svg>
<svg style="left:266px;top:105px" width="16" height="16" viewBox="0 0 16 16"><circle cx="8" cy="8" r="7.5" fill="#4a86c8"/><circle cx="8" cy="8" r="7" fill="none" stroke="#2a5a9a" stroke-width="0.8"/><path d="M3.5 3.5L12.5 12.5M12.5 3.5L3.5 12.5" stroke="#fff" stroke-width="2.4"/><ellipse cx="8" cy="4" rx="4.5" ry="2.5" fill="#8ab8e8" opacity="0.5"/></svg>
<svg style="left:303px;top:105px" width="3" height="16" viewBox="0 0 3 16"><rect x="1" y="1" width="2" height="2" fill="#fff"/><rect x="0" y="0" width="2" height="2" fill="#4a78c0"/><rect x="1" y="5" width="2" height="2" fill="#fff"/><rect x="0" y="4" width="2" height="2" fill="#4a78c0"/><rect x="1" y="9" width="2" height="2" fill="#fff"/><rect x="0" y="8" width="2" height="2" fill="#4a78c0"/><rect x="1" y="13" width="2" height="2" fill="#fff"/><rect x="0" y="12" width="2" height="2" fill="#4a78c0"/></svg>
<svg style="left:312px;top:107px" width="15" height="13" viewBox="0 0 15 13"><path d="M2.5 5.5 Q4 1 8 1 Q11.5 1 13 4" stroke="#3a8ad8" stroke-width="1.8" fill="none"/><path d="M14.5 1.5V5.5H10.5Z" fill="#3a8ad8"/><path d="M12.5 7.5 Q11 12 7 12 Q3.5 12 2 9" stroke="#3a8ad8" stroke-width="1.8" fill="none"/><path d="M0.5 11.5V7.5H4.5Z" fill="#3a8ad8"/></svg>
<svg style="left:336px;top:106px" width="15" height="15" viewBox="0 0 15 15"><path d="M4.5 0.5H10.5L14.5 4.5V10.5L10.5 14.5H4.5L0.5 10.5V4.5Z" fill="#c8b4b0"/><path d="M4.5 4.5L10.5 10.5M10.5 4.5L4.5 10.5" stroke="#fff" stroke-width="2.2"/></svg>
<svg style="left:363px;top:108px" width="7" height="10" viewBox="0 0 7 10"><rect x="0" y="0" width="1.3" height="10" fill="#8f8f8f"/><path d="M7 0V10L2 5Z" fill="#8f8f8f"/></svg>
<svg style="left:384px;top:108px" width="6" height="10" viewBox="0 0 6 10"><path d="M5.5 0V10L0 5Z" fill="#8f8f8f"/></svg>
<div class="a" style="left:404px;top:103px;width:114px;height:20px;background:#efefef"></div>
<svg style="left:530px;top:108px" width="6" height="10" viewBox="0 0 6 10"><path d="M0.5 0V10L6 5Z" fill="#8f8f8f"/></svg>
<svg style="left:552px;top:108px" width="7" height="10" viewBox="0 0 7 10"><path d="M0 0V10L5 5Z" fill="#8f8f8f"/><rect x="5.7" y="0" width="1.3" height="10" fill="#8f8f8f"/></svg>
<div class="a" style="left:0px;top:126px;width:1095px;height:24px;background:linear-gradient(#b5d3fb,#d0e3fc 50%,#e6f0fd)"></div>
<div class="a" style="left:0px;top:126px;width:1095px;height:1px;background:#afcbee"></div>
<div class="a" style="left:0px;top:148px;width:1095px;height:1px;background:#bed5f0"></div>
<div class="a" style="left:0px;top:149px;width:1095px;height:1px;background:#fff"></div>
<svg style="left:0;top:128px" width="470" height="23" viewBox="0 0 470 23">
<path d="M17 22 L37 1.5 Q38 0.5 40 0.5 L451 0.5 Q454.5 0.5 454.5 4 L454.5 21.5 L17 21.5Z" fill="#fff" stroke="#a9c3e6" stroke-width="1"/><rect x="17" y="20" width="437" height="3" fill="#fff"/>
</svg>
<div class="tx" style="left:53px;top:132.00px;font-size:13px;line-height:13px;font-weight:bold;color:#000;transform:scaleX(0.890);transform-origin:0 0">ใบจ่ายเงินเดือนพร้อมยอดสะสม2 สำหรับกระดาษต่อเนื่อง (PRUSR424.RPT)</div>
<svg style="left:439px;top:133px" width="10" height="10" viewBox="0 0 10 10"><path d="M1.5 2 L8.5 9 M8.5 2 L1.5 9" stroke="#4a6fae" stroke-width="1.1"/></svg>
<div class="a" style="left:0px;top:150px;width:1095px;height:561px;background:#fff"></div>
<div class="a" style="left:0px;top:150px;width:1px;height:561px;background:#c3daf5"></div>
<div class="a" style="left:3px;top:150px;width:1090px;height:1px;background:#a3a3a3"></div>
<div class="a" style="left:3px;top:150px;width:1px;height:561px;background:#a3a3a3"></div>
<div class="a" style="left:5px;top:152px;width:1087px;height:554px;background:#d6e5f7"></div>
<div class="a" style="left:5px;top:152px;width:1085px;height:20px;background:#bfdbff"></div>
<div class="a" style="left:1090px;top:78px;width:5px;height:633px;background:#f3f7fc"></div>
<div class="a" style="left:1091px;top:78px;width:4px;height:1px;background:#fff"></div>
<div class="a" style="left:1090px;top:78px;width:2px;height:633px;background:#fff"></div>
<div class="a" style="left:1092px;top:80px;width:1px;height:631px;background:#d3e1f1"></div>
<div class="a" style="left:1093px;top:81px;width:2px;height:24px;background:#c4daf5"></div>
<div class="a" style="left:1093px;top:681px;width:2px;height:29px;background:#c5daf3"></div>
<svg style="left:6px;top:152px" width="50" height="21" viewBox="0 0 50 21">
<defs><linearGradient id="dg" x1="0" y1="0" x2="0" y2="1"><stop offset="0" stop-color="#f3f8fe"/><stop offset="1" stop-color="#dde9f9"/></linearGradient></defs>
<path d="M0.5 20.5 Q3.5 20 3.5 16 L3.5 4 Q3.5 0.5 7 0.5 L40 0.5 Q43.5 0.5 43.5 4 L43.5 16 Q43.5 20 46.5 20.5Z" fill="url(#dg)" stroke="#8db2e3" stroke-width="1"/>
</svg>
<div class="tx rg" style="left:13px;top:157.19px;font-size:11px;line-height:11px;font-weight:normal;color:#15428b;letter-spacing:-0.3px">Design</div>
<div class="a" style="left:5px;top:172px;width:1085px;height:2px;background:#e4eefb"></div>
<div class="a" style="left:8px;top:174px;width:1082px;height:532px;background:linear-gradient(#a9c3e9 0%,#8aa9d7 33%,#7194c7 66%,#6285ba 100%)"></div>
<svg style="left:8px;top:174px" width="1082" height="532"><path d="M0 154 Q40 125 110 95 Q250 40 420 0 L0 0Z" fill="#fff" opacity="0.10"/><path d="M0 133 Q30 115 70 100 Q200 50 330 0 L0 0Z" fill="#fff" opacity="0.05"/></svg>
<div class="a" style="left:1090px;top:151px;width:2px;height:560px;background:#fff"></div>
<div class="a" style="left:4px;top:706px;width:1088px;height:3px;background:#dae7f6"></div>
<div class="a" style="left:4px;top:709px;width:1091px;height:1px;background:#fff"></div>
<div class="a" style="left:0px;top:710px;width:1095px;height:1px;background:#a8a8a8"></div>
<div class="a" style="left:8px;top:199px;width:1px;height:507px;background:#9ea6b2"></div>
<div class="a" style="left:12px;top:199px;width:1px;height:507px;background:#9ea6b2"></div>
<div class="a" style="left:81px;top:180px;width:862px;height:13px;background:#fff"></div>
<div class="a" style="left:61px;top:199px;width:14px;height:507px;background:#fff"></div>
<div class="a" style="left:80px;top:199px;width:863px;height:507px;background:#fff"></div>
<svg style="left:0;top:0" width="1095" height="711" viewBox="0 0 1095 711"><rect x="91" y="185" width="1" height="2" fill="#000"/><rect x="103" y="184" width="1" height="5" fill="#000"/><rect x="114" y="185" width="1" height="2" fill="#000"/><rect x="137" y="185" width="1" height="2" fill="#000"/><rect x="148" y="184" width="1" height="5" fill="#000"/><rect x="159" y="185" width="1" height="2" fill="#000"/><rect x="182" y="185" width="1" height="2" fill="#000"/><rect x="194" y="184" width="1" height="5" fill="#000"/><rect x="205" y="185" width="1" height="2" fill="#000"/><rect x="228" y="185" width="1" height="2" fill="#000"/><rect x="239" y="184" width="1" height="5" fill="#000"/><rect x="250" y="185" width="1" height="2" fill="#000"/><rect x="273" y="185" width="1" height="2" fill="#000"/><rect x="284" y="184" width="1" height="5" fill="#000"/><rect x="296" y="185" width="1" height="2" fill="#000"/><rect x="318" y="185" width="1" height="2" fill="#000"/><rect x="330" y="184" width="1" height="5" fill="#000"/><rect x="341" y="185" width="1" height="2" fill="#000"/><rect x="364" y="185" width="1" height="2" fill="#000"/><rect x="375" y="184" width="1" height="5" fill="#000"/><rect x="386" y="185" width="1" height="2" fill="#000"/><rect x="409" y="185" width="1" height="2" fill="#000"/><rect x="420" y="184" width="1" height="5" fill="#000"/><rect x="432" y="185" width="1" height="2" fill="#000"/><rect x="455" y="185" width="1" height="2" fill="#000"/><rect x="466" y="184" width="1" height="5" fill="#000"/><rect x="477" y="185" width="1" height="2" fill="#000"/><rect x="500" y="185" width="1" height="2" fill="#000"/><rect x="511" y="184" width="1" height="5" fill="#000"/><rect x="523" y="185" width="1" height="2" fill="#000"/><rect x="545" y="185" width="1" height="2" fill="#000"/><rect x="557" y="184" width="1" height="5" fill="#000"/><rect x="568" y="185" width="1" height="2" fill="#000"/><rect x="591" y="185" width="1" height="2" fill="#000"/><rect x="602" y="184" width="1" height="5" fill="#000"/><rect x="613" y="185" width="1" height="2" fill="#000"/><rect x="636" y="185" width="1" height="2" fill="#000"/><rect x="648" y="184" width="1" height="5" fill="#000"/><rect x="659" y="185" width="1" height="2" fill="#000"/><rect x="682" y="185" width="1" height="2" fill="#000"/><rect x="693" y="184" width="1" height="5" fill="#000"/><rect x="704" y="185" width="1" height="2" fill="#000"/><rect x="727" y="185" width="1" height="2" fill="#000"/><rect x="738" y="184" width="1" height="5" fill="#000"/><rect x="750" y="185" width="1" height="2" fill="#000"/><rect x="772" y="185" width="1" height="2" fill="#000"/><rect x="784" y="184" width="1" height="5" fill="#000"/><rect x="795" y="185" width="1" height="2" fill="#000"/><rect x="818" y="185" width="1" height="2" fill="#000"/><rect x="829" y="184" width="1" height="5" fill="#000"/><rect x="840" y="185" width="1" height="2" fill="#000"/><rect x="863" y="185" width="1" height="2" fill="#000"/><rect x="874" y="184" width="1" height="5" fill="#000"/><rect x="886" y="185" width="1" height="2" fill="#000"/><rect x="909" y="185" width="1" height="2" fill="#000"/><rect x="920" y="184" width="1" height="5" fill="#000"/><rect x="931" y="185" width="1" height="2" fill="#000"/><text x="125.4" y="190" font-size="10" text-anchor="middle" font-family="Liberation Sans" fill="#000" stroke="#000" stroke-width="0.25">1</text><text x="170.8" y="190" font-size="10" text-anchor="middle" font-family="Liberation Sans" fill="#000" stroke="#000" stroke-width="0.25">2</text><text x="216.2" y="190" font-size="10" text-anchor="middle" font-family="Liberation Sans" fill="#000" stroke="#000" stroke-width="0.25">3</text><text x="261.6" y="190" font-size="10" text-anchor="middle" font-family="Liberation Sans" fill="#000" stroke="#000" stroke-width="0.25">4</text><text x="307.0" y="190" font-size="10" text-anchor="middle" font-family="Liberation Sans" fill="#000" stroke="#000" stroke-width="0.25">5</text><text x="352.4" y="190" font-size="10" text-anchor="middle" font-family="Liberation Sans" fill="#000" stroke="#000" stroke-width="0.25">6</text><text x="397.8" y="190" font-size="10" text-anchor="middle" font-family="Liberation Sans" fill="#000" stroke="#000" stroke-width="0.25">7</text><text x="443.2" y="190" font-size="10" text-anchor="middle" font-family="Liberation Sans" fill="#000" stroke="#000" stroke-width="0.25">8</text><text x="488.6" y="190" font-size="10" text-anchor="middle" font-family="Liberation Sans" fill="#000" stroke="#000" stroke-width="0.25">9</text><text x="534.0" y="190" font-size="10" text-anchor="middle" font-family="Liberation Sans" fill="#000" stroke="#000" stroke-width="0.25">10</text><text x="579.4" y="190" font-size="10" text-anchor="middle" font-family="Liberation Sans" fill="#000" stroke="#000" stroke-width="0.25">11</text><text x="624.8" y="190" font-size="10" text-anchor="middle" font-family="Liberation Sans" fill="#000" stroke="#000" stroke-width="0.25">12</text><text x="670.2" y="190" font-size="10" text-anchor="middle" font-family="Liberation Sans" fill="#000" stroke="#000" stroke-width="0.25">13</text><text x="715.6" y="190" font-size="10" text-anchor="middle" font-family="Liberation Sans" fill="#000" stroke="#000" stroke-width="0.25">14</text><text x="761.0" y="190" font-size="10" text-anchor="middle" font-family="Liberation Sans" fill="#000" stroke="#000" stroke-width="0.25">15</text><text x="806.4" y="190" font-size="10" text-anchor="middle" font-family="Liberation Sans" fill="#000" stroke="#000" stroke-width="0.25">16</text><text x="851.8" y="190" font-size="10" text-anchor="middle" font-family="Liberation Sans" fill="#000" stroke="#000" stroke-width="0.25">17</text><text x="897.2" y="190" font-size="10" text-anchor="middle" font-family="Liberation Sans" fill="#000" stroke="#000" stroke-width="0.25">18</text><path d="M84.5 187.5H92.5V191L88.5 195L84.5 191Z" fill="#e8e8e8" stroke="#000"/><path d="M92.5 185V187" stroke="#000"/><path d="M100.5 187.5H108.5V191L104.5 195L100.5 191Z" fill="#e8e8e8" stroke="#000"/><path d="M100.5 185V187" stroke="#000"/><path d="M106.5 187.5H114.5V191L110.5 195L106.5 191Z" fill="#e8e8e8" stroke="#000"/><path d="M114.5 185V187" stroke="#000"/><path d="M114.5 187.5H122.5V191L118.5 195L114.5 191Z" fill="#e8e8e8" stroke="#000"/><path d="M114.5 185V187" stroke="#000"/><path d="M129.5 187.5H137.5V191L133.5 195L129.5 191Z" fill="#e8e8e8" stroke="#000"/><path d="M137.5 185V187" stroke="#000"/><path d="M168.5 187.5H176.5V191L172.5 195L168.5 191Z" fill="#e8e8e8" stroke="#000"/><path d="M168.5 185V187" stroke="#000"/><path d="M174.5 187.5H182.5V191L178.5 195L174.5 191Z" fill="#e8e8e8" stroke="#000"/><path d="M182.5 185V187" stroke="#000"/><path d="M182.5 187.5H190.5V191L186.5 195L182.5 191Z" fill="#e8e8e8" stroke="#000"/><path d="M182.5 185V187" stroke="#000"/><path d="M216.5 187.5H224.5V191L220.5 195L216.5 191Z" fill="#e8e8e8" stroke="#000"/><path d="M224.5 185V187" stroke="#000"/><path d="M221.5 187.5H229.5V191L225.5 195L221.5 191Z" fill="#e8e8e8" stroke="#000"/><path d="M221.5 185V187" stroke="#000"/><path d="M258.5 187.5H266.5V191L262.5 195L258.5 191Z" fill="#e8e8e8" stroke="#000"/><path d="M266.5 185V187" stroke="#000"/><path d="M279.5 187.5H287.5V191L283.5 195L279.5 191Z" fill="#e8e8e8" stroke="#000"/><path d="M279.5 185V187" stroke="#000"/><path d="M286.5 187.5H294.5V191L290.5 195L286.5 191Z" fill="#e8e8e8" stroke="#000"/><path d="M294.5 185V187" stroke="#000"/><path d="M303.5 187.5H311.5V191L307.5 195L303.5 191Z" fill="#e8e8e8" stroke="#000"/><path d="M303.5 185V187" stroke="#000"/><path d="M310.5 187.5H318.5V191L314.5 195L310.5 191Z" fill="#e8e8e8" stroke="#000"/><path d="M318.5 185V187" stroke="#000"/><path d="M348.5 187.5H356.5V191L352.5 195L348.5 191Z" fill="#e8e8e8" stroke="#000"/><path d="M348.5 185V187" stroke="#000"/><path d="M358.5 187.5H366.5V191L362.5 195L358.5 191Z" fill="#e8e8e8" stroke="#000"/><path d="M366.5 185V187" stroke="#000"/><path d="M365.5 187.5H373.5V191L369.5 195L365.5 191Z" fill="#e8e8e8" stroke="#000"/><path d="M365.5 185V187" stroke="#000"/><path d="M372.5 187.5H380.5V191L376.5 195L372.5 191Z" fill="#e8e8e8" stroke="#000"/><path d="M380.5 185V187" stroke="#000"/><path d="M388.5 187.5H396.5V191L392.5 195L388.5 191Z" fill="#e8e8e8" stroke="#000"/><path d="M388.5 185V187" stroke="#000"/><path d="M396.5 187.5H404.5V191L400.5 195L396.5 191Z" fill="#e8e8e8" stroke="#000"/><path d="M404.5 185V187" stroke="#000"/><path d="M402.5 187.5H410.5V191L406.5 195L402.5 191Z" fill="#e8e8e8" stroke="#000"/><path d="M402.5 185V187" stroke="#000"/><path d="M430.5 187.5H438.5V191L434.5 195L430.5 191Z" fill="#e8e8e8" stroke="#000"/><path d="M438.5 185V187" stroke="#000"/><path d="M437.5 187.5H445.5V191L441.5 195L437.5 191Z" fill="#e8e8e8" stroke="#000"/><path d="M437.5 185V187" stroke="#000"/><path d="M470.5 187.5H478.5V191L474.5 195L470.5 191Z" fill="#e8e8e8" stroke="#000"/><path d="M478.5 185V187" stroke="#000"/><path d="M479.5 187.5H487.5V191L483.5 195L479.5 191Z" fill="#e8e8e8" stroke="#000"/><path d="M479.5 185V187" stroke="#000"/><path d="M487.5 187.5H495.5V191L491.5 195L487.5 191Z" fill="#e8e8e8" stroke="#000"/><path d="M495.5 185V187" stroke="#000"/><path d="M498.5 187.5H506.5V191L502.5 195L498.5 191Z" fill="#e8e8e8" stroke="#000"/><path d="M498.5 185V187" stroke="#000"/><path d="M520.5 187.5H528.5V191L524.5 195L520.5 191Z" fill="#e8e8e8" stroke="#000"/><path d="M528.5 185V187" stroke="#000"/><path d="M526.5 187.5H534.5V191L530.5 195L526.5 191Z" fill="#e8e8e8" stroke="#000"/><path d="M526.5 185V187" stroke="#000"/><path d="M572.5 187.5H580.5V191L576.5 195L572.5 191Z" fill="#e8e8e8" stroke="#000"/><path d="M580.5 185V187" stroke="#000"/><path d="M658.5 187.5H666.5V191L662.5 195L658.5 191Z" fill="#e8e8e8" stroke="#000"/><path d="M658.5 185V187" stroke="#000"/><path d="M664.5 187.5H672.5V191L668.5 195L664.5 191Z" fill="#e8e8e8" stroke="#000"/><path d="M672.5 185V187" stroke="#000"/><path d="M669.5 187.5H677.5V191L673.5 195L669.5 191Z" fill="#e8e8e8" stroke="#000"/><path d="M669.5 185V187" stroke="#000"/><path d="M747.5 187.5H755.5V191L751.5 195L747.5 191Z" fill="#e8e8e8" stroke="#000"/><path d="M755.5 185V187" stroke="#000"/><path d="M754.5 187.5H762.5V191L758.5 195L754.5 191Z" fill="#e8e8e8" stroke="#000"/><path d="M754.5 185V187" stroke="#000"/><path d="M767.5 187.5H775.5V191L771.5 195L767.5 191Z" fill="#e8e8e8" stroke="#000"/><path d="M775.5 185V187" stroke="#000"/><path d="M778.5 187.5H786.5V191L782.5 195L778.5 191Z" fill="#e8e8e8" stroke="#000"/><path d="M778.5 185V187" stroke="#000"/><path d="M786.5 187.5H794.5V191L790.5 195L786.5 191Z" fill="#e8e8e8" stroke="#000"/><path d="M794.5 185V187" stroke="#000"/><path d="M792.5 187.5H800.5V191L796.5 195L792.5 191Z" fill="#e8e8e8" stroke="#000"/><path d="M792.5 185V187" stroke="#000"/><path d="M857.5 187.5H865.5V191L861.5 195L857.5 191Z" fill="#e8e8e8" stroke="#000"/><path d="M865.5 185V187" stroke="#000"/><path d="M906.5 187.5H914.5V191L910.5 195L906.5 191Z" fill="#e8e8e8" stroke="#000"/><path d="M906.5 185V187" stroke="#000"/><path d="M942.5 187.5H950.5V191L946.5 195L942.5 191Z" fill="#e8e8e8" stroke="#000"/><path d="M950.5 185V187" stroke="#000"/><rect x="66" y="206" width="2" height="1" fill="#000"/><rect x="65" y="240" width="4" height="1" fill="#000"/><rect x="66" y="228" width="2" height="1" fill="#000"/><rect x="66" y="251" width="2" height="1" fill="#000"/><rect x="65" y="285" width="4" height="1" fill="#000"/><rect x="66" y="274" width="2" height="1" fill="#000"/><rect x="66" y="297" width="2" height="1" fill="#000"/><rect x="65" y="331" width="4" height="1" fill="#000"/><rect x="66" y="319" width="2" height="1" fill="#000"/><rect x="66" y="342" width="2" height="1" fill="#000"/><rect x="65" y="376" width="4" height="1" fill="#000"/><rect x="66" y="365" width="2" height="1" fill="#000"/><rect x="66" y="388" width="2" height="1" fill="#000"/><rect x="65" y="422" width="4" height="1" fill="#000"/><rect x="66" y="410" width="2" height="1" fill="#000"/><rect x="66" y="433" width="2" height="1" fill="#000"/><rect x="65" y="467" width="4" height="1" fill="#000"/><rect x="66" y="456" width="2" height="1" fill="#000"/><rect x="66" y="479" width="2" height="1" fill="#000"/><rect x="65" y="513" width="4" height="1" fill="#000"/><rect x="66" y="501" width="2" height="1" fill="#000"/><rect x="66" y="524" width="2" height="1" fill="#000"/><rect x="65" y="558" width="4" height="1" fill="#000"/><rect x="66" y="547" width="2" height="1" fill="#000"/><rect x="66" y="570" width="2" height="1" fill="#000"/><rect x="65" y="604" width="4" height="1" fill="#000"/><rect x="66" y="592" width="2" height="1" fill="#000"/><rect x="66" y="615" width="2" height="1" fill="#000"/><rect x="65" y="649" width="4" height="1" fill="#000"/><rect x="66" y="638" width="2" height="1" fill="#000"/><rect x="66" y="661" width="2" height="1" fill="#000"/><rect x="65" y="695" width="4" height="1" fill="#000"/><rect x="66" y="683" width="2" height="1" fill="#000"/><text x="0" y="0" font-size="11" text-anchor="middle" font-family="Liberation Sans" fill="#1a1a1a" transform="translate(63 217.0) rotate(90)">1</text><text x="0" y="0" font-size="11" text-anchor="middle" font-family="Liberation Sans" fill="#1a1a1a" transform="translate(63 262.5) rotate(90)">2</text><text x="0" y="0" font-size="11" text-anchor="middle" font-family="Liberation Sans" fill="#1a1a1a" transform="translate(63 308.0) rotate(90)">3</text><text x="0" y="0" font-size="11" text-anchor="middle" font-family="Liberation Sans" fill="#1a1a1a" transform="translate(63 353.5) rotate(90)">4</text><text x="0" y="0" font-size="11" text-anchor="middle" font-family="Liberation Sans" fill="#1a1a1a" transform="translate(63 399.0) rotate(90)">5</text><text x="0" y="0" font-size="11" text-anchor="middle" font-family="Liberation Sans" fill="#1a1a1a" transform="translate(63 444.5) rotate(90)">6</text><text x="0" y="0" font-size="11" text-anchor="middle" font-family="Liberation Sans" fill="#1a1a1a" transform="translate(63 490.0) rotate(90)">7</text><text x="0" y="0" font-size="11" text-anchor="middle" font-family="Liberation Sans" fill="#1a1a1a" transform="translate(63 535.5) rotate(90)">8</text><text x="0" y="0" font-size="11" text-anchor="middle" font-family="Liberation Sans" fill="#1a1a1a" transform="translate(63 581.0) rotate(90)">9</text><text x="0" y="0" font-size="11" text-anchor="middle" font-family="Liberation Sans" fill="#1a1a1a" transform="translate(63 626.5) rotate(90)">10</text><text x="0" y="0" font-size="11" text-anchor="middle" font-family="Liberation Sans" fill="#1a1a1a" transform="translate(63 672.0) rotate(90)">11</text><path d="M68.5 215.5V223.5H72L76 219.5L72 215.5Z" fill="#e8e8e8" stroke="#000"/><path d="M66 215.5H68.5" stroke="#000"/><path d="M68.5 222.5V230.5H72L76 226.5L72 222.5Z" fill="#e8e8e8" stroke="#000"/><path d="M66 230.5H68.5" stroke="#000"/><path d="M68.5 248.5V256.5H72L76 252.5L72 248.5Z" fill="#e8e8e8" stroke="#000"/><path d="M66 248.5H68.5" stroke="#000"/><path d="M68.5 256.5V264.5H72L76 260.5L72 256.5Z" fill="#e8e8e8" stroke="#000"/><path d="M66 264.5H68.5" stroke="#000"/><path d="M68.5 266.5V274.5H72L76 270.5L72 266.5Z" fill="#e8e8e8" stroke="#000"/><path d="M66 266.5H68.5" stroke="#000"/><path d="M68.5 282.5V290.5H72L76 286.5L72 282.5Z" fill="#e8e8e8" stroke="#000"/><path d="M66 290.5H68.5" stroke="#000"/><path d="M68.5 306.5V314.5H72L76 310.5L72 306.5Z" fill="#e8e8e8" stroke="#000"/><path d="M66 306.5H68.5" stroke="#000"/><path d="M68.5 312.5V320.5H72L76 316.5L72 312.5Z" fill="#e8e8e8" stroke="#000"/><path d="M66 320.5H68.5" stroke="#000"/><path d="M68.5 330.5V338.5H72L76 334.5L72 330.5Z" fill="#e8e8e8" stroke="#000"/><path d="M66 330.5H68.5" stroke="#000"/><path d="M68.5 349.5V357.5H72L76 353.5L72 349.5Z" fill="#e8e8e8" stroke="#000"/><path d="M66 357.5H68.5" stroke="#000"/><path d="M68.5 358.5V366.5H72L76 362.5L72 358.5Z" fill="#e8e8e8" stroke="#000"/><path d="M66 358.5H68.5" stroke="#000"/><path d="M68.5 370.5V378.5H72L76 374.5L72 370.5Z" fill="#e8e8e8" stroke="#000"/><path d="M66 378.5H68.5" stroke="#000"/><path d="M68.5 388.5V396.5H72L76 392.5L72 388.5Z" fill="#e8e8e8" stroke="#000"/><path d="M66 388.5H68.5" stroke="#000"/><path d="M68.5 407.5V415.5H72L76 411.5L72 407.5Z" fill="#e8e8e8" stroke="#000"/><path d="M66 415.5H68.5" stroke="#000"/><path d="M68.5 426.5V434.5H72L76 430.5L72 426.5Z" fill="#e8e8e8" stroke="#000"/><path d="M66 426.5H68.5" stroke="#000"/><path d="M68.5 445.5V453.5H72L76 449.5L72 445.5Z" fill="#e8e8e8" stroke="#000"/><path d="M66 453.5H68.5" stroke="#000"/><path d="M68.5 463.5V471.5H72L76 467.5L72 463.5Z" fill="#e8e8e8" stroke="#000"/><path d="M66 463.5H68.5" stroke="#000"/><path d="M68.5 482.5V490.5H72L76 486.5L72 482.5Z" fill="#e8e8e8" stroke="#000"/><path d="M66 490.5H68.5" stroke="#000"/><path d="M68.5 499.5V507.5H72L76 503.5L72 499.5Z" fill="#e8e8e8" stroke="#000"/><path d="M66 499.5H68.5" stroke="#000"/><path d="M68.5 520.5V528.5H72L76 524.5L72 520.5Z" fill="#e8e8e8" stroke="#000"/><path d="M66 528.5H68.5" stroke="#000"/><path d="M68.5 536.5V544.5H72L76 540.5L72 536.5Z" fill="#e8e8e8" stroke="#000"/><path d="M66 536.5H68.5" stroke="#000"/><path d="M68.5 544.5V552.5H72L76 548.5L72 544.5Z" fill="#e8e8e8" stroke="#000"/><path d="M66 552.5H68.5" stroke="#000"/><path d="M68.5 583.5V591.5H72L76 587.5L72 583.5Z" fill="#e8e8e8" stroke="#000"/><path d="M66 583.5H68.5" stroke="#000"/><path d="M68.5 594.5V602.5H72L76 598.5L72 594.5Z" fill="#e8e8e8" stroke="#000"/><path d="M66 602.5H68.5" stroke="#000"/><path d="M68.5 602.5V610.5H72L76 606.5L72 602.5Z" fill="#e8e8e8" stroke="#000"/><path d="M66 602.5H68.5" stroke="#000"/><path d="M68.5 619.5V627.5H72L76 623.5L72 619.5Z" fill="#e8e8e8" stroke="#000"/><path d="M66 627.5H68.5" stroke="#000"/><path d="M68.5 625.5V633.5H72L76 629.5L72 625.5Z" fill="#e8e8e8" stroke="#000"/><path d="M66 625.5H68.5" stroke="#000"/><path d="M68.5 633.5V641.5H72L76 637.5L72 633.5Z" fill="#e8e8e8" stroke="#000"/><path d="M66 641.5H68.5" stroke="#000"/><path d="M68.5 654.5V662.5H72L76 658.5L72 654.5Z" fill="#e8e8e8" stroke="#000"/><path d="M66 654.5H68.5" stroke="#000"/><path d="M68.5 664.5V672.5H72L76 668.5L72 664.5Z" fill="#e8e8e8" stroke="#000"/><path d="M66 672.5H68.5" stroke="#000"/><path d="M68.5 672.5V680.5H72L76 676.5L72 672.5Z" fill="#e8e8e8" stroke="#000"/><path d="M66 672.5H68.5" stroke="#000"/><path d="M68.5 691.5V699.5H72L76 695.5L72 691.5Z" fill="#e8e8e8" stroke="#000"/><path d="M66 699.5H68.5" stroke="#000"/><path d="M68.5 697.5V705.5H72L76 701.5L72 697.5Z" fill="#e8e8e8" stroke="#000"/><path d="M66 697.5H68.5" stroke="#000"/></svg>
<div class="tx" style="left:348.5px;top:203.26px;font-size:18px;line-height:18px;font-weight:bold;color:#000;letter-spacing:0.2px">?ThaiCompanyName</div>
<div class="tx rg" style="left:90px;top:242.84px;font-size:12px;line-height:12px;font-weight:normal;color:#000;">?THe</div>
<div class="tx" style="left:120px;top:242.00px;font-size:13px;line-height:13px;font-weight:bold;color:#000;letter-spacing:0.3px">TDATA1</div>
<div class="tx rg" style="left:263px;top:242.84px;font-size:12px;line-height:12px;font-weight:normal;color:#000;">?THead</div>
<div class="tx" style="left:310px;top:242.00px;font-size:13px;line-height:13px;font-weight:bold;color:#000;letter-spacing:0.3px">TDATA2</div>
<div class="tx rg" style="left:529px;top:242.84px;font-size:12px;line-height:12px;font-weight:normal;color:#000;">?THead</div>
<div class="tx" style="left:577px;top:242.00px;font-size:13px;line-height:13px;font-weight:bold;color:#000;letter-spacing:0.3px">TDATA3</div>
<div class="tx rg" style="left:713px;top:242.84px;font-size:12px;line-height:12px;font-weight:normal;color:#000;">?THead4</div>
<div class="tx" style="left:782px;top:242.00px;font-size:13px;line-height:13px;font-weight:bold;color:#000;letter-spacing:0.3px">TDATA4</div>
<div class="a" style="left:88px;top:286px;width:694px;height:1px;background:#000"></div>
<div class="a" style="left:88px;top:332px;width:694px;height:1px;background:#000"></div>
<div class="a" style="left:88px;top:562px;width:694px;height:1px;background:#000"></div>
<div class="a" style="left:88px;top:614px;width:694px;height:1px;background:#000"></div>
<div class="a" style="left:88px;top:286px;width:1px;height:329px;background:#000"></div>
<div class="a" style="left:781px;top:286px;width:1px;height:329px;background:#000"></div>
<div class="a" style="left:289px;top:286px;width:1px;height:277px;background:#000"></div>
<div class="a" style="left:368px;top:286px;width:1px;height:329px;background:#000"></div>
<div class="a" style="left:480px;top:286px;width:1px;height:329px;background:#000"></div>
<div class="a" style="left:668px;top:286px;width:1px;height:329px;background:#000"></div>
<div class="tx" style="left:-12.0px;width:400px;text-align:center;top:296.00px;font-size:13px;line-height:13px;font-weight:bold;color:#000;letter-spacing:0.35px">รายได้</div>
<div class="tx" style="left:-11.800000000000011px;width:400px;text-align:center;top:315.00px;font-size:13px;line-height:13px;font-weight:bold;color:#000;letter-spacing:0.4px">Earnings</div>
<div class="tx" style="left:129.0px;width:400px;text-align:center;top:296.00px;font-size:13px;line-height:13px;font-weight:bold;color:#000;letter-spacing:0.35px">จำนวน</div>
<div class="tx" style="left:129.2px;width:400px;text-align:center;top:315.00px;font-size:13px;line-height:13px;font-weight:bold;color:#000;letter-spacing:0.4px">Number</div>
<div class="tx" style="left:224.0px;width:400px;text-align:center;top:296.00px;font-size:13px;line-height:13px;font-weight:bold;color:#000;letter-spacing:0.35px">จำนวนเงิน</div>
<div class="tx" style="left:224.2px;width:400px;text-align:center;top:315.00px;font-size:13px;line-height:13px;font-weight:bold;color:#000;letter-spacing:0.4px">Amount</div>
<div class="tx" style="left:374.0px;width:400px;text-align:center;top:296.00px;font-size:13px;line-height:13px;font-weight:bold;color:#000;letter-spacing:0.35px">รายการหัก</div>
<div class="tx" style="left:374.20000000000005px;width:400px;text-align:center;top:315.00px;font-size:13px;line-height:13px;font-weight:bold;color:#000;letter-spacing:0.4px">Deductions</div>
<div class="tx" style="left:525.0px;width:400px;text-align:center;top:296.00px;font-size:13px;line-height:13px;font-weight:bold;color:#000;letter-spacing:0.35px">จำนวนเงิน</div>
<div class="tx" style="left:525.2px;width:400px;text-align:center;top:315.00px;font-size:13px;line-height:13px;font-weight:bold;color:#000;letter-spacing:0.4px">Amount</div>
<div class="tx" style="left:104px;top:338.84px;font-size:12px;line-height:12px;font-weight:bold;color:#000;letter-spacing:0.35px">?FHead1</div>
<div class="tx rg" style="left:75px;width:400px;text-align:right;top:339.69px;font-size:11px;line-height:11px;font-weight:normal;color:#000;letter-spacing:0.95px">FDATA1</div>
<div class="tx" style="left:492px;top:338.84px;font-size:12px;line-height:12px;font-weight:bold;color:#000;letter-spacing:0.35px">?FHead18</div>
<div class="tx rg" style="left:373px;width:400px;text-align:right;top:339.69px;font-size:11px;line-height:11px;font-weight:normal;color:#000;letter-spacing:0.95px">FDATA18</div>
<div class="tx" style="left:104px;top:357.84px;font-size:12px;line-height:12px;font-weight:bold;color:#000;letter-spacing:0.35px">?FHead2</div>
<div class="tx rg" style="left:75px;width:400px;text-align:right;top:358.69px;font-size:11px;line-height:11px;font-weight:normal;color:#000;letter-spacing:0.95px">FDATA3</div>
<div class="tx" style="left:492px;top:357.84px;font-size:12px;line-height:12px;font-weight:bold;color:#000;letter-spacing:0.35px">?FHead19</div>
<div class="tx rg" style="left:373px;width:400px;text-align:right;top:358.69px;font-size:11px;line-height:11px;font-weight:normal;color:#000;letter-spacing:0.95px">FDATA19</div>
<div class="tx rg" style="left:-36px;width:400px;text-align:right;top:358.69px;font-size:11px;line-height:11px;font-weight:normal;color:#000;letter-spacing:0.95px">FDATA2</div>
<div class="tx" style="left:104px;top:377.84px;font-size:12px;line-height:12px;font-weight:bold;color:#000;letter-spacing:0.35px">?FHead4</div>
<div class="tx rg" style="left:75px;width:400px;text-align:right;top:378.69px;font-size:11px;line-height:11px;font-weight:normal;color:#000;letter-spacing:0.95px">FDATA5</div>
<div class="tx" style="left:492px;top:377.84px;font-size:12px;line-height:12px;font-weight:bold;color:#000;letter-spacing:0.35px">?FHead20</div>
<div class="tx rg" style="left:373px;width:400px;text-align:right;top:378.69px;font-size:11px;line-height:11px;font-weight:normal;color:#000;letter-spacing:0.95px">FDATA20</div>
<div class="tx rg" style="left:-36px;width:400px;text-align:right;top:378.69px;font-size:11px;line-height:11px;font-weight:normal;color:#000;letter-spacing:0.95px">FDATA4</div>
<div class="tx" style="left:104px;top:396.84px;font-size:12px;line-height:12px;font-weight:bold;color:#000;letter-spacing:0.35px">?FHead6</div>
<div class="tx rg" style="left:75px;width:400px;text-align:right;top:397.69px;font-size:11px;line-height:11px;font-weight:normal;color:#000;letter-spacing:0.95px">FDATA7</div>
<div class="tx" style="left:492px;top:396.84px;font-size:12px;line-height:12px;font-weight:bold;color:#000;letter-spacing:0.35px">?FHead21</div>
<div class="tx rg" style="left:373px;width:400px;text-align:right;top:397.69px;font-size:11px;line-height:11px;font-weight:normal;color:#000;letter-spacing:0.95px">FDATA21</div>
<div class="tx rg" style="left:-36px;width:400px;text-align:right;top:397.69px;font-size:11px;line-height:11px;font-weight:normal;color:#000;letter-spacing:0.95px">FDATA6</div>
<div class="tx" style="left:104px;top:415.84px;font-size:12px;line-height:12px;font-weight:bold;color:#000;letter-spacing:0.35px">?FHead8</div>
<div class="tx rg" style="left:75px;width:400px;text-align:right;top:416.69px;font-size:11px;line-height:11px;font-weight:normal;color:#000;letter-spacing:0.95px">FDATA9</div>
<div class="tx" style="left:492px;top:415.84px;font-size:12px;line-height:12px;font-weight:bold;color:#000;letter-spacing:0.35px">?FHead22</div>
<div class="tx rg" style="left:373px;width:400px;text-align:right;top:416.69px;font-size:11px;line-height:11px;font-weight:normal;color:#000;letter-spacing:0.95px">FDATA22</div>
<div class="tx rg" style="left:-36px;width:400px;text-align:right;top:416.69px;font-size:11px;line-height:11px;font-weight:normal;color:#000;letter-spacing:0.95px">FDATA8</div>
<div class="tx" style="left:104px;top:434.84px;font-size:12px;line-height:12px;font-weight:bold;color:#000;letter-spacing:0.35px">?FHead10</div>
<div class="tx rg" style="left:75px;width:400px;text-align:right;top:435.69px;font-size:11px;line-height:11px;font-weight:normal;color:#000;letter-spacing:0.95px">FDATA11</div>
<div class="tx" style="left:492px;top:434.84px;font-size:12px;line-height:12px;font-weight:bold;color:#000;letter-spacing:0.35px">?FHead23</div>
<div class="tx rg" style="left:373px;width:400px;text-align:right;top:435.69px;font-size:11px;line-height:11px;font-weight:normal;color:#000;letter-spacing:0.95px">FDATA23</div>
<div class="tx rg" style="left:-36px;width:400px;text-align:right;top:435.69px;font-size:11px;line-height:11px;font-weight:normal;color:#000;letter-spacing:0.95px">FDATA10</div>
<div class="tx" style="left:104px;top:453.84px;font-size:12px;line-height:12px;font-weight:bold;color:#000;letter-spacing:0.35px">?FHead12</div>
<div class="tx rg" style="left:75px;width:400px;text-align:right;top:454.69px;font-size:11px;line-height:11px;font-weight:normal;color:#000;letter-spacing:0.95px">FDATA12</div>
<div class="tx" style="left:492px;top:453.84px;font-size:12px;line-height:12px;font-weight:bold;color:#000;letter-spacing:0.35px">?FHead24</div>
<div class="tx rg" style="left:373px;width:400px;text-align:right;top:454.69px;font-size:11px;line-height:11px;font-weight:normal;color:#000;letter-spacing:0.95px">FDATA24</div>
<div class="tx" style="left:104px;top:471.84px;font-size:12px;line-height:12px;font-weight:bold;color:#000;letter-spacing:0.35px">?FHead13</div>
<div class="tx rg" style="left:75px;width:400px;text-align:right;top:472.69px;font-size:11px;line-height:11px;font-weight:normal;color:#000;letter-spacing:0.95px">FDATA13</div>
<div class="tx" style="left:492px;top:471.84px;font-size:12px;line-height:12px;font-weight:bold;color:#000;letter-spacing:0.35px">?FHead25</div>
<div class="tx rg" style="left:373px;width:400px;text-align:right;top:472.69px;font-size:11px;line-height:11px;font-weight:normal;color:#000;letter-spacing:0.95px">FDATA25</div>
<div class="tx" style="left:104px;top:490.84px;font-size:12px;line-height:12px;font-weight:bold;color:#000;letter-spacing:0.35px">?FHead14</div>
<div class="tx rg" style="left:75px;width:400px;text-align:right;top:491.69px;font-size:11px;line-height:11px;font-weight:normal;color:#000;letter-spacing:0.95px">FDATA14</div>
<div class="tx" style="left:492px;top:490.84px;font-size:12px;line-height:12px;font-weight:bold;color:#000;letter-spacing:0.35px">?FHead26</div>
<div class="tx rg" style="left:373px;width:400px;text-align:right;top:491.69px;font-size:11px;line-height:11px;font-weight:normal;color:#000;letter-spacing:0.95px">FDATA26</div>
<div class="tx" style="left:104px;top:508.84px;font-size:12px;line-height:12px;font-weight:bold;color:#000;letter-spacing:0.35px">?FHead15</div>
<div class="tx rg" style="left:75px;width:400px;text-align:right;top:509.69px;font-size:11px;line-height:11px;font-weight:normal;color:#000;letter-spacing:0.95px">FDATA15</div>
<div class="tx" style="left:492px;top:508.84px;font-size:12px;line-height:12px;font-weight:bold;color:#000;letter-spacing:0.35px">?FHead27</div>
<div class="tx rg" style="left:373px;width:400px;text-align:right;top:509.69px;font-size:11px;line-height:11px;font-weight:normal;color:#000;letter-spacing:0.95px">FDATA27</div>
<div class="tx" style="left:104px;top:527.84px;font-size:12px;line-height:12px;font-weight:bold;color:#000;letter-spacing:0.35px">?FHead16</div>
<div class="tx rg" style="left:75px;width:400px;text-align:right;top:528.69px;font-size:11px;line-height:11px;font-weight:normal;color:#000;letter-spacing:0.95px">FDATA16</div>
<div class="tx" style="left:492px;top:527.84px;font-size:12px;line-height:12px;font-weight:bold;color:#000;letter-spacing:0.35px">?FHead28</div>
<div class="tx rg" style="left:373px;width:400px;text-align:right;top:528.69px;font-size:11px;line-height:11px;font-weight:normal;color:#000;letter-spacing:0.95px">FDATA28</div>
<div class="tx" style="left:104px;top:544.84px;font-size:12px;line-height:12px;font-weight:bold;color:#000;letter-spacing:0.35px">?FHead37</div>
<div class="tx rg" style="left:75px;width:400px;text-align:right;top:545.69px;font-size:11px;line-height:11px;font-weight:normal;color:#000;letter-spacing:0.95px">FDATA37</div>
<div class="tx" style="left:492px;top:544.84px;font-size:12px;line-height:12px;font-weight:bold;color:#000;letter-spacing:0.35px">?FHead29</div>
<div class="tx rg" style="left:373px;width:400px;text-align:right;top:545.69px;font-size:11px;line-height:11px;font-weight:normal;color:#000;letter-spacing:0.95px">FDATA29</div>
<div class="tx" style="left:28.0px;width:400px;text-align:center;top:574.00px;font-size:13px;line-height:13px;font-weight:bold;color:#000;letter-spacing:0.35px">รวมเงินได้</div>
<div class="tx" style="left:28.5px;width:400px;text-align:center;top:591.50px;font-size:13px;line-height:13px;font-weight:bold;color:#000;letter-spacing:0.6px">Total Earnings</div>
<div class="tx rg" style="left:75px;width:400px;text-align:right;top:594.19px;font-size:11px;line-height:11px;font-weight:normal;color:#000;letter-spacing:0.95px">FDATA17</div>
<div class="tx" style="left:373.0px;width:400px;text-align:center;top:574.00px;font-size:13px;line-height:13px;font-weight:bold;color:#000;letter-spacing:0.35px">รวมรายการหัก</div>
<div class="tx" style="left:373.5px;width:400px;text-align:center;top:591.50px;font-size:13px;line-height:13px;font-weight:bold;color:#000;letter-spacing:0.6px">Total Deduction</div>
<div class="tx rg" style="left:373px;width:400px;text-align:right;top:594.19px;font-size:11px;line-height:11px;font-weight:normal;color:#000;letter-spacing:0.95px">FDATA30</div>
<div class="a" style="left:795px;top:286px;width:115px;height:1px;background:#000"></div>
<div class="a" style="left:795px;top:350px;width:115px;height:1px;background:#000"></div>
<div class="a" style="left:795px;top:388px;width:115px;height:1px;background:#000"></div>
<div class="a" style="left:795px;top:286px;width:1px;height:103px;background:#000"></div>
<div class="a" style="left:909px;top:286px;width:1px;height:103px;background:#000"></div>
<div class="tx" style="left:652.0px;width:400px;text-align:center;top:299.50px;font-size:13px;line-height:13px;font-weight:bold;color:#000;letter-spacing:0.35px">วันที่จ่าย</div>
<div class="tx" style="left:652.3px;width:400px;text-align:center;top:324.00px;font-size:13px;line-height:13px;font-weight:bold;color:#000;letter-spacing:0.6px">Payroll Date</div>
<div class="tx rg" style="left:652.3px;width:400px;text-align:center;top:367.84px;font-size:12px;line-height:12px;font-weight:normal;color:#000;letter-spacing:0.5px">@Todate</div>
<div class="a" style="left:795px;top:501px;width:115px;height:1px;background:#000"></div>
<div class="a" style="left:795px;top:562px;width:115px;height:1px;background:#000"></div>
<div class="a" style="left:795px;top:614px;width:115px;height:1px;background:#000"></div>
<div class="a" style="left:795px;top:501px;width:1px;height:114px;background:#000"></div>
<div class="a" style="left:909px;top:501px;width:1px;height:114px;background:#000"></div>
<div class="tx" style="left:652.0px;width:400px;text-align:center;top:511.50px;font-size:13px;line-height:13px;font-weight:bold;color:#000;letter-spacing:0.35px">เงินรับสุทธิ</div>
<div class="tx" style="left:653.3px;width:400px;text-align:center;top:536.00px;font-size:13px;line-height:13px;font-weight:bold;color:#000;letter-spacing:0.5px">Net To Pay</div>
<div class="tx rg" style="left:652.5px;width:400px;text-align:center;top:588.29px;font-size:11px;line-height:11px;font-weight:normal;color:#000;letter-spacing:0.95px">FDATA31</div>
<div class="a" style="left:88px;top:624px;width:693px;height:1px;background:#000"></div>
<div class="a" style="left:88px;top:656px;width:693px;height:1px;background:#000"></div>
<div class="a" style="left:88px;top:686px;width:693px;height:1px;background:#000"></div>
<div class="a" style="left:88px;top:624px;width:1px;height:63px;background:#000"></div>
<div class="a" style="left:780px;top:624px;width:1px;height:63px;background:#000"></div>
<div class="a" style="left:224px;top:624px;width:1px;height:63px;background:#000"></div>
<div class="a" style="left:362px;top:624px;width:1px;height:63px;background:#000"></div>
<div class="a" style="left:502px;top:624px;width:1px;height:63px;background:#000"></div>
<div class="a" style="left:662px;top:624px;width:1px;height:63px;background:#000"></div>
<div class="tx rg" style="left:-44.0px;width:400px;text-align:center;top:638.84px;font-size:12px;line-height:12px;font-weight:normal;color:#000;letter-spacing:0.25px">?FHead32</div>
<div class="tx" style="left:-43.599999999999994px;width:400px;text-align:center;top:666.60px;font-size:13px;line-height:13px;font-weight:bold;color:#000;letter-spacing:0.83px">FDATA32</div>
<div class="tx rg" style="left:93.0px;width:400px;text-align:center;top:638.84px;font-size:12px;line-height:12px;font-weight:normal;color:#000;letter-spacing:0.25px">?FHead33</div>
<div class="tx" style="left:93.39999999999998px;width:400px;text-align:center;top:666.60px;font-size:13px;line-height:13px;font-weight:bold;color:#000;letter-spacing:0.83px">FDATA33</div>
<div class="tx rg" style="left:232.0px;width:400px;text-align:center;top:638.84px;font-size:12px;line-height:12px;font-weight:normal;color:#000;letter-spacing:0.25px">?FHead34</div>
<div class="tx" style="left:232.39999999999998px;width:400px;text-align:center;top:666.60px;font-size:13px;line-height:13px;font-weight:bold;color:#000;letter-spacing:0.83px">FDATA34</div>
<div class="tx rg" style="left:382.0px;width:400px;text-align:center;top:638.84px;font-size:12px;line-height:12px;font-weight:normal;color:#000;letter-spacing:0.25px">?FHead35</div>
<div class="tx" style="left:382.4px;width:400px;text-align:center;top:666.60px;font-size:13px;line-height:13px;font-weight:bold;color:#000;letter-spacing:0.83px">FDATA35</div>
<div class="tx rg" style="left:521.0px;width:400px;text-align:center;top:638.84px;font-size:12px;line-height:12px;font-weight:normal;color:#000;letter-spacing:0.25px">?FHead36</div>
<div class="tx" style="left:521.4px;width:400px;text-align:center;top:666.60px;font-size:13px;line-height:13px;font-weight:bold;color:#000;letter-spacing:0.83px">FDATA36</div>
<div class="tx rg" style="left:89px;top:695.23px;font-size:8px;line-height:8px;font-weight:normal;color:#333;letter-spacing:0.2px">@EMPNOTIFY</div>
<div class="a" style="left:373px;top:541px;width:104px;height:19px;border:3px solid #8dbde9;box-shadow:inset 0 0 0 1px #6aa7e2"></div>
<div class="a" style="left:373px;top:549px;width:4px;height:4px;background:#2f86e0"></div>
<div class="a" style="left:474px;top:549px;width:4px;height:4px;background:#2f86e0"></div>
<div class="a" style="left:424px;top:541px;width:4px;height:4px;background:#2f86e0"></div>
<div class="a" style="left:424px;top:557px;width:4px;height:4px;background:#2f86e0"></div>
<svg style="left:0;top:0" width="1095" height="711" viewBox="0 0 1095 711"><path d="M519 240.5H521.5V243 M570 240.5H572.5V243 M572.5 252V256.5H570 M711 240.5H715 M713 240.5V243 M711 256.5H715 M713 254V256.5" stroke="#000" stroke-width="1" fill="none" shape-rendering="crispEdges"/></svg>
<svg style="left:0;top:0" width="1095" height="711" viewBox="0 0 1095 711"><path d="M104.5 335 V340 M105 337.5 H107 M104.5 348 V353 M105 350.5 H107 M282.5 335 V340 M282 337.5 H280 M282.5 348 V353 M282 350.5 H280 M377.5 335 V340 M378 337.5 H380 M377.5 348 V353 M378 350.5 H380 M473.5 335 V340 M473 337.5 H471 M473.5 348 V353 M473 350.5 H471 M492.5 335 V340 M493 337.5 H495 M492.5 348 V353 M493 350.5 H495 M665.5 335 V340 M665 337.5 H663 M665.5 348 V353 M665 350.5 H663 M672.5 335 V340 M673 337.5 H675 M672.5 348 V353 M673 350.5 H675 M771.5 335 V340 M771 337.5 H769 M771.5 348 V353 M771 350.5 H769 M104.5 354 V359 M105 356.5 H107 M104.5 367 V372 M105 369.5 H107 M282.5 354 V359 M282 356.5 H280 M282.5 367 V372 M282 369.5 H280 M377.5 354 V359 M378 356.5 H380 M377.5 367 V372 M378 369.5 H380 M473.5 354 V359 M473 356.5 H471 M473.5 367 V372 M473 369.5 H471 M492.5 354 V359 M493 356.5 H495 M492.5 367 V372 M493 369.5 H495 M665.5 354 V359 M665 356.5 H663 M665.5 367 V372 M665 369.5 H663 M672.5 354 V359 M673 356.5 H675 M672.5 367 V372 M673 369.5 H675 M771.5 354 V359 M771 356.5 H769 M771.5 367 V372 M771 369.5 H769 M289.5 354 V359 M290 356.5 H292 M289.5 367 V372 M290 369.5 H292 M362.5 354 V359 M362 356.5 H360 M362.5 367 V372 M362 369.5 H360 M104.5 374 V379 M105 376.5 H107 M104.5 387 V392 M105 389.5 H107 M282.5 374 V379 M282 376.5 H280 M282.5 387 V392 M282 389.5 H280 M377.5 374 V379 M378 376.5 H380 M377.5 387 V392 M378 389.5 H380 M473.5 374 V379 M473 376.5 H471 M473.5 387 V392 M473 389.5 H471 M492.5 374 V379 M493 376.5 H495 M492.5 387 V392 M493 389.5 H495 M665.5 374 V379 M665 376.5 H663 M665.5 387 V392 M665 389.5 H663 M672.5 374 V379 M673 376.5 H675 M672.5 387 V392 M673 389.5 H675 M771.5 374 V379 M771 376.5 H769 M771.5 387 V392 M771 389.5 H769 M289.5 374 V379 M290 376.5 H292 M289.5 387 V392 M290 389.5 H292 M362.5 374 V379 M362 376.5 H360 M362.5 387 V392 M362 389.5 H360 M104.5 393 V398 M105 395.5 H107 M104.5 406 V411 M105 408.5 H107 M282.5 393 V398 M282 395.5 H280 M282.5 406 V411 M282 408.5 H280 M377.5 393 V398 M378 395.5 H380 M377.5 406 V411 M378 408.5 H380 M473.5 393 V398 M473 395.5 H471 M473.5 406 V411 M473 408.5 H471 M492.5 393 V398 M493 395.5 H495 M492.5 406 V411 M493 408.5 H495 M665.5 393 V398 M665 395.5 H663 M665.5 406 V411 M665 408.5 H663 M672.5 393 V398 M673 395.5 H675 M672.5 406 V411 M673 408.5 H675 M771.5 393 V398 M771 395.5 H769 M771.5 406 V411 M771 408.5 H769 M289.5 393 V398 M290 395.5 H292 M289.5 406 V411 M290 408.5 H292 M362.5 393 V398 M362 395.5 H360 M362.5 406 V411 M362 408.5 H360 M104.5 412 V417 M105 414.5 H107 M104.5 425 V430 M105 427.5 H107 M282.5 412 V417 M282 414.5 H280 M282.5 425 V430 M282 427.5 H280 M377.5 412 V417 M378 414.5 H380 M377.5 425 V430 M378 427.5 H380 M473.5 412 V417 M473 414.5 H471 M473.5 425 V430 M473 427.5 H471 M492.5 412 V417 M493 414.5 H495 M492.5 425 V430 M493 427.5 H495 M665.5 412 V417 M665 414.5 H663 M665.5 425 V430 M665 427.5 H663 M672.5 412 V417 M673 414.5 H675 M672.5 425 V430 M673 427.5 H675 M771.5 412 V417 M771 414.5 H769 M771.5 425 V430 M771 427.5 H769 M289.5 412 V417 M290 414.5 H292 M289.5 425 V430 M290 427.5 H292 M362.5 412 V417 M362 414.5 H360 M362.5 425 V430 M362 427.5 H360 M104.5 431 V436 M105 433.5 H107 M104.5 444 V449 M105 446.5 H107 M282.5 431 V436 M282 433.5 H280 M282.5 444 V449 M282 446.5 H280 M377.5 431 V436 M378 433.5 H380 M377.5 444 V449 M378 446.5 H380 M473.5 431 V436 M473 433.5 H471 M473.5 444 V449 M473 446.5 H471 M492.5 431 V436 M493 433.5 H495 M492.5 444 V449 M493 446.5 H495 M665.5 431 V436 M665 433.5 H663 M665.5 444 V449 M665 446.5 H663 M672.5 431 V436 M673 433.5 H675 M672.5 444 V449 M673 446.5 H675 M771.5 431 V436 M771 433.5 H769 M771.5 444 V449 M771 446.5 H769 M289.5 431 V436 M290 433.5 H292 M289.5 444 V449 M290 446.5 H292 M362.5 431 V436 M362 433.5 H360 M362.5 444 V449 M362 446.5 H360 M104.5 450 V455 M105 452.5 H107 M104.5 463 V468 M105 465.5 H107 M282.5 450 V455 M282 452.5 H280 M282.5 463 V468 M282 465.5 H280 M377.5 450 V455 M378 452.5 H380 M377.5 463 V468 M378 465.5 H380 M473.5 450 V455 M473 452.5 H471 M473.5 463 V468 M473 465.5 H471 M492.5 450 V455 M493 452.5 H495 M492.5 463 V468 M493 465.5 H495 M665.5 450 V455 M665 452.5 H663 M665.5 463 V468 M665 465.5 H663 M672.5 450 V455 M673 452.5 H675 M672.5 463 V468 M673 465.5 H675 M771.5 450 V455 M771 452.5 H769 M771.5 463 V468 M771 465.5 H769 M104.5 468 V473 M105 470.5 H107 M104.5 481 V486 M105 483.5 H107 M282.5 468 V473 M282 470.5 H280 M282.5 481 V486 M282 483.5 H280 M377.5 468 V473 M378 470.5 H380 M377.5 481 V486 M378 483.5 H380 M473.5 468 V473 M473 470.5 H471 M473.5 481 V486 M473 483.5 H471 M492.5 468 V473 M493 470.5 H495 M492.5 481 V486 M493 483.5 H495 M665.5 468 V473 M665 470.5 H663 M665.5 481 V486 M665 483.5 H663 M672.5 468 V473 M673 470.5 H675 M672.5 481 V486 M673 483.5 H675 M771.5 468 V473 M771 470.5 H769 M771.5 481 V486 M771 483.5 H769 M104.5 487 V492 M105 489.5 H107 M104.5 500 V505 M105 502.5 H107 M282.5 487 V492 M282 489.5 H280 M282.5 500 V505 M282 502.5 H280 M377.5 487 V492 M378 489.5 H380 M377.5 500 V505 M378 502.5 H380 M473.5 487 V492 M473 489.5 H471 M473.5 500 V505 M473 502.5 H471 M492.5 487 V492 M493 489.5 H495 M492.5 500 V505 M493 502.5 H495 M665.5 487 V492 M665 489.5 H663 M665.5 500 V505 M665 502.5 H663 M672.5 487 V492 M673 489.5 H675 M672.5 500 V505 M673 502.5 H675 M771.5 487 V492 M771 489.5 H769 M771.5 500 V505 M771 502.5 H769 M104.5 505 V510 M105 507.5 H107 M104.5 518 V523 M105 520.5 H107 M282.5 505 V510 M282 507.5 H280 M282.5 518 V523 M282 520.5 H280 M377.5 505 V510 M378 507.5 H380 M377.5 518 V523 M378 520.5 H380 M473.5 505 V510 M473 507.5 H471 M473.5 518 V523 M473 520.5 H471 M492.5 505 V510 M493 507.5 H495 M492.5 518 V523 M493 520.5 H495 M665.5 505 V510 M665 507.5 H663 M665.5 518 V523 M665 520.5 H663 M672.5 505 V510 M673 507.5 H675 M672.5 518 V523 M673 520.5 H675 M771.5 505 V510 M771 507.5 H769 M771.5 518 V523 M771 520.5 H769 M104.5 524 V529 M105 526.5 H107 M104.5 537 V542 M105 539.5 H107 M282.5 524 V529 M282 526.5 H280 M282.5 537 V542 M282 539.5 H280 M377.5 524 V529 M378 526.5 H380 M377.5 537 V542 M378 539.5 H380 M473.5 524 V529 M473 526.5 H471 M473.5 537 V542 M473 539.5 H471 M492.5 524 V529 M493 526.5 H495 M492.5 537 V542 M493 539.5 H495 M665.5 524 V529 M665 526.5 H663 M665.5 537 V542 M665 539.5 H663 M672.5 524 V529 M673 526.5 H675 M672.5 537 V542 M673 539.5 H675 M771.5 524 V529 M771 526.5 H769 M771.5 537 V542 M771 539.5 H769 M104.5 541 V546 M105 543.5 H107 M104.5 554 V559 M105 556.5 H107 M282.5 541 V546 M282 543.5 H280 M282.5 554 V559 M282 556.5 H280 M377.5 541 V546 M378 543.5 H380 M377.5 554 V559 M378 556.5 H380 M473.5 541 V546 M473 543.5 H471 M473.5 554 V559 M473 556.5 H471 M492.5 541 V546 M493 543.5 H495 M492.5 554 V559 M493 556.5 H495 M665.5 541 V546 M665 543.5 H663 M665.5 554 V559 M665 556.5 H663 M672.5 541 V546 M673 543.5 H675 M672.5 554 V559 M673 556.5 H675 M771.5 541 V546 M771 543.5 H769 M771.5 554 V559 M771 556.5 H769 M88.5 292 V297 M89 294.5 H91 M88.5 306 V311 M89 308.5 H91 M289.5 292 V297 M289 294.5 H287 M289.5 306 V311 M289 308.5 H287 M88.5 310 V315 M89 312.5 H91 M88.5 326 V331 M89 328.5 H91 M289.5 310 V315 M289 312.5 H287 M289.5 326 V331 M289 328.5 H287 M289.5 292 V297 M290 294.5 H292 M289.5 306 V311 M290 308.5 H292 M368.5 292 V297 M368 294.5 H366 M368.5 306 V311 M368 308.5 H366 M289.5 310 V315 M290 312.5 H292 M289.5 326 V331 M290 328.5 H292 M368.5 310 V315 M368 312.5 H366 M368.5 326 V331 M368 328.5 H366 M368.5 292 V297 M369 294.5 H371 M368.5 306 V311 M369 308.5 H371 M480.5 292 V297 M480 294.5 H478 M480.5 306 V311 M480 308.5 H478 M368.5 310 V315 M369 312.5 H371 M368.5 326 V331 M369 328.5 H371 M480.5 310 V315 M480 312.5 H478 M480.5 326 V331 M480 328.5 H478 M480.5 292 V297 M481 294.5 H483 M480.5 306 V311 M481 308.5 H483 M668.5 292 V297 M668 294.5 H666 M668.5 306 V311 M668 308.5 H666 M480.5 310 V315 M481 312.5 H483 M480.5 326 V331 M481 328.5 H483 M668.5 310 V315 M668 312.5 H666 M668.5 326 V331 M668 328.5 H666 M668.5 292 V297 M669 294.5 H671 M668.5 306 V311 M669 308.5 H671 M781.5 292 V297 M781 294.5 H779 M781.5 306 V311 M781 308.5 H779 M668.5 310 V315 M669 312.5 H671 M668.5 326 V331 M669 328.5 H671 M781.5 310 V315 M781 312.5 H779 M781.5 326 V331 M781 328.5 H779 M88.5 201 V206 M89 203.5 H91 M88.5 223 V228 M89 225.5 H91 M790.5 201 V206 M790 203.5 H788 M790.5 223 V228 M790 225.5 H788 M89.5 238 V243 M90 240.5 H92 M89.5 255 V260 M90 257.5 H92 M134.5 238 V243 M134 240.5 H132 M134.5 255 V260 M134 257.5 H132 M120.5 238 V243 M121 240.5 H123 M120.5 255 V260 M121 257.5 H123 M264.5 238 V243 M264 240.5 H262 M264.5 255 V260 M264 257.5 H262 M260.5 238 V243 M261 240.5 H263 M260.5 255 V260 M261 257.5 H263 M309.5 238 V243 M309 240.5 H307 M309.5 255 V260 M309 257.5 H307 M304.5 238 V243 M305 240.5 H307 M304.5 255 V260 M305 257.5 H307 M520.5 238 V243 M520 240.5 H518 M520.5 255 V260 M520 257.5 H518 M521.5 238 V243 M522 240.5 H524 M521.5 255 V260 M522 257.5 H524 M576.5 238 V243 M576 240.5 H574 M576.5 255 V260 M576 257.5 H574 M574.5 238 V243 M575 240.5 H577 M574.5 255 V260 M575 257.5 H577 M714.5 238 V243 M714 240.5 H712 M714.5 255 V260 M714 257.5 H712 M712.5 238 V243 M713 240.5 H715 M712.5 255 V260 M713 257.5 H715 M770.5 238 V243 M770 240.5 H768 M770.5 255 V260 M770 257.5 H768 M782.5 238 V243 M783 240.5 H785 M782.5 255 V260 M783 257.5 H785 M909.5 238 V243 M909 240.5 H907 M909.5 255 V260 M909 257.5 H907 M88.5 570 V575 M89 572.5 H91 M88.5 585 V590 M89 587.5 H91 M368.5 570 V575 M368 572.5 H366 M368.5 585 V590 M368 587.5 H366 M88.5 586 V591 M89 588.5 H91 M88.5 601 V606 M89 603.5 H91 M368.5 586 V591 M368 588.5 H366 M368.5 601 V606 M368 603.5 H366 M377.5 583 V588 M378 585.5 H380 M377.5 600 V605 M378 602.5 H380 M473.5 583 V588 M473 585.5 H471 M473.5 600 V605 M473 602.5 H471 M368.5 570 V575 M369 572.5 H371 M368.5 585 V590 M369 587.5 H371 M480.5 570 V575 M480 572.5 H478 M480.5 585 V590 M480 587.5 H478 M480.5 570 V575 M481 572.5 H483 M480.5 585 V590 M481 587.5 H483 M668.5 570 V575 M668 572.5 H666 M668.5 585 V590 M668 587.5 H666 M480.5 586 V591 M481 588.5 H483 M480.5 601 V606 M481 603.5 H483 M668.5 586 V591 M668 588.5 H666 M668.5 601 V606 M668 603.5 H666 M672.5 583 V588 M673 585.5 H675 M672.5 600 V605 M673 602.5 H675 M771.5 583 V588 M771 585.5 H769 M771.5 600 V605 M771 602.5 H769 M668.5 570 V575 M669 572.5 H671 M668.5 585 V590 M669 587.5 H671 M781.5 570 V575 M781 572.5 H779 M781.5 585 V590 M781 587.5 H779 M88.5 634 V639 M89 636.5 H91 M88.5 652 V657 M89 654.5 H91 M224.5 634 V639 M224 636.5 H222 M224.5 652 V657 M224 654.5 H222 M88.5 662 V667 M89 664.5 H91 M88.5 677 V682 M89 679.5 H91 M224.5 662 V667 M224 664.5 H222 M224.5 677 V682 M224 679.5 H222 M224.5 634 V639 M225 636.5 H227 M224.5 652 V657 M225 654.5 H227 M362.5 634 V639 M362 636.5 H360 M362.5 652 V657 M362 654.5 H360 M224.5 662 V667 M225 664.5 H227 M224.5 677 V682 M225 679.5 H227 M362.5 662 V667 M362 664.5 H360 M362.5 677 V682 M362 679.5 H360 M362.5 634 V639 M363 636.5 H365 M362.5 652 V657 M363 654.5 H365 M502.5 634 V639 M502 636.5 H500 M502.5 652 V657 M502 654.5 H500 M362.5 662 V667 M363 664.5 H365 M362.5 677 V682 M363 679.5 H365 M502.5 662 V667 M502 664.5 H500 M502.5 677 V682 M502 679.5 H500 M502.5 634 V639 M503 636.5 H505 M502.5 652 V657 M503 654.5 H505 M662.5 634 V639 M662 636.5 H660 M662.5 652 V657 M662 654.5 H660 M502.5 662 V667 M503 664.5 H505 M502.5 677 V682 M503 679.5 H505 M662.5 662 V667 M662 664.5 H660 M662.5 677 V682 M662 679.5 H660 M662.5 634 V639 M663 636.5 H665 M662.5 652 V657 M663 654.5 H665 M780.5 634 V639 M780 636.5 H778 M780.5 652 V657 M780 654.5 H778 M662.5 662 V667 M663 664.5 H665 M662.5 677 V682 M663 679.5 H665 M780.5 662 V667 M780 664.5 H778 M780.5 677 V682 M780 679.5 H778 M795.5 290 V295 M796 292.5 H798 M795.5 344 V349 M796 346.5 H798 M909.5 290 V295 M909 292.5 H907 M909.5 344 V349 M909 346.5 H907 M795.5 355 V360 M796 357.5 H798 M795.5 381 V386 M796 383.5 H798 M909.5 355 V360 M909 357.5 H907 M909.5 381 V386 M909 383.5 H907 M795.5 505 V510 M796 507.5 H798 M795.5 555 V560 M796 557.5 H798 M909.5 505 V510 M909 507.5 H907 M909.5 555 V560 M909 557.5 H907 M795.5 565 V570 M796 567.5 H798 M795.5 607 V612 M796 609.5 H798 M909.5 565 V570 M909 567.5 H907 M909.5 607 V612 M909 609.5 H907 M89.5 690 V695 M90 692.5 H92 M89.5 701 V706 M90 703.5 H92 M780.5 690 V695 M780 692.5 H778 M780.5 701 V706 M780 703.5 H778" stroke="#ff0000" stroke-width="1" fill="none" shape-rendering="crispEdges"/></svg>
</body></html>
